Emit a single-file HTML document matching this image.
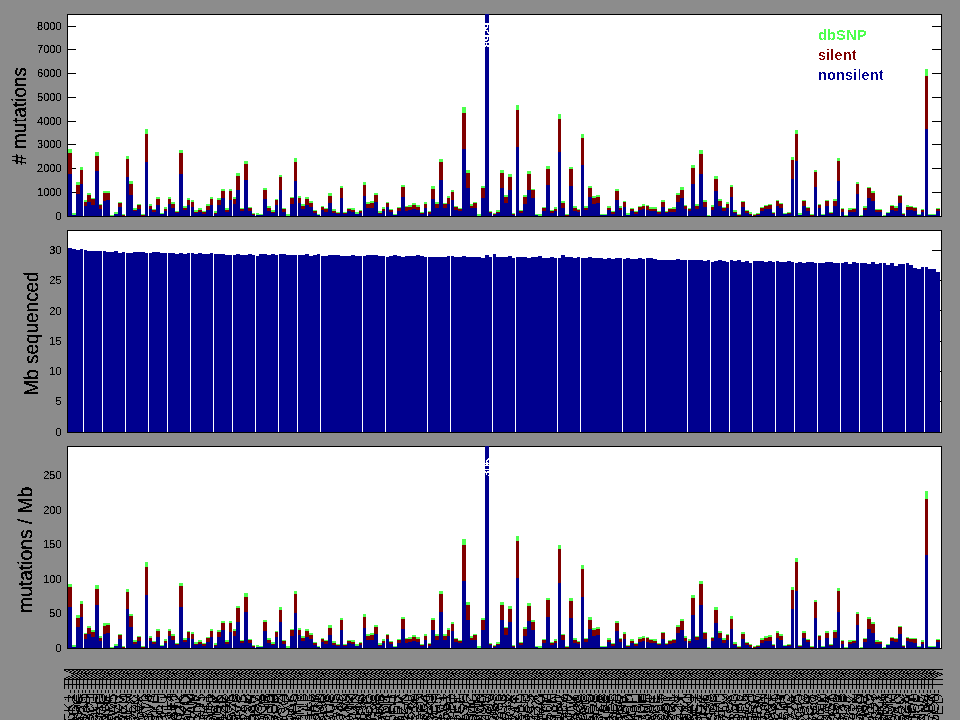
<!DOCTYPE html>
<html><head><meta charset="utf-8"><title>mutation rates</title>
<style>html,body{margin:0;padding:0;background:#8c8c8c;}body{width:960px;height:720px;overflow:hidden;}svg{display:block;font-family:"Liberation Sans",Arial,Helvetica,sans-serif;}</style>
</head><body>
<svg width="960" height="720" viewBox="0 0 960 720" style="will-change:transform">
<defs><filter id="px" x="0" y="0" width="960" height="720" filterUnits="userSpaceOnUse" color-interpolation-filters="sRGB"><feComponentTransfer><feFuncA type="discrete" tableValues="0 0 1 1 1"/></feComponentTransfer></filter><filter id="pt" x="-5%" y="-20%" width="110%" height="140%" color-interpolation-filters="sRGB"><feComponentTransfer><feFuncA type="discrete" tableValues="0 0 0 1 1"/></feComponentTransfer></filter><filter id="pb" x="0" y="0" width="960" height="720" filterUnits="userSpaceOnUse" color-interpolation-filters="sRGB"><feComponentTransfer><feFuncA type="discrete" tableValues="0 0 0 1 1 1 1 1 1 1"/></feComponentTransfer></filter><filter id="pl" x="-5%" y="-20%" width="110%" height="140%" color-interpolation-filters="sRGB"><feComponentTransfer><feFuncA type="discrete" tableValues="0 0 0 0 0 0 0 1 1 1"/></feComponentTransfer></filter></defs>
<rect x="0" y="0" width="960" height="720" fill="#8c8c8c"/>
<g shape-rendering="crispEdges"><rect x="67" y="14" width="875" height="203" fill="#000"/><rect x="68" y="15" width="873" height="201" fill="#fff"/><rect x="68" y="192" width="8" height="1" fill="#000"/><rect x="932" y="192" width="9" height="1" fill="#000"/><rect x="68" y="168" width="8" height="1" fill="#000"/><rect x="932" y="168" width="9" height="1" fill="#000"/><rect x="68" y="144" width="8" height="1" fill="#000"/><rect x="932" y="144" width="9" height="1" fill="#000"/><rect x="68" y="121" width="8" height="1" fill="#000"/><rect x="932" y="121" width="9" height="1" fill="#000"/><rect x="68" y="97" width="8" height="1" fill="#000"/><rect x="932" y="97" width="9" height="1" fill="#000"/><rect x="68" y="73" width="8" height="1" fill="#000"/><rect x="932" y="73" width="9" height="1" fill="#000"/><rect x="68" y="49" width="8" height="1" fill="#000"/><rect x="932" y="49" width="9" height="1" fill="#000"/><rect x="68" y="26" width="8" height="1" fill="#000"/><rect x="932" y="26" width="9" height="1" fill="#000"/></g>
<g shape-rendering="crispEdges"><path fill="#00008f" d="M68 174h4v42h-4zM72 215h4v1h-4zM76 194h4v22h-4zM80 184h3v32h-3zM84 206h3v10h-3zM87 202h4v14h-4zM91 205h4v11h-4zM95 171h4v45h-4zM99 209h3v7h-3zM103 201h3v15h-3zM106 200h4v16h-4zM114 214h4v2h-4zM118 207h4v9h-4zM126 177h3v39h-3zM129 195h4v21h-4zM133 211h4v5h-4zM137 209h4v7h-4zM145 162h3v54h-3zM149 209h3v7h-3zM152 212h4v4h-4zM156 205h4v11h-4zM160 214h4v2h-4zM164 211h3v5h-3zM168 204h3v12h-3zM171 208h4v8h-4zM175 213h4v3h-4zM179 174h4v42h-4zM183 210h4v6h-4zM187 205h3v11h-3zM191 207h3v9h-3zM194 213h4v3h-4zM198 212h4v4h-4zM202 214h4v2h-4zM206 210h4v6h-4zM210 205h3v11h-3zM214 214h3v2h-3zM217 205h4v11h-4zM221 198h4v18h-4zM225 212h4v4h-4zM229 200h3v16h-3zM233 204h3v12h-3zM236 190h4v26h-4zM240 211h4v5h-4zM244 180h4v36h-4zM248 211h4v5h-4zM252 215h3v1h-3zM256 215h3v1h-3zM259 215h4v1h-4zM263 199h4v17h-4zM267 211h4v5h-4zM271 213h4v3h-4zM275 205h3v11h-3zM279 190h3v26h-3zM282 212h4v4h-4zM290 204h4v12h-4zM294 181h3v35h-3zM298 203h3v13h-3zM301 209h4v7h-4zM305 205h4v11h-4zM309 207h4v9h-4zM313 213h4v3h-4zM317 215h3v1h-3zM321 210h3v6h-3zM324 212h4v4h-4zM328 203h4v13h-4zM332 213h4v3h-4zM336 214h4v2h-4zM340 198h3v18h-3zM343 214h4v2h-4zM347 211h4v5h-4zM351 212h4v4h-4zM355 214h4v2h-4zM359 213h3v3h-3zM363 196h3v20h-3zM366 208h4v8h-4zM370 208h4v8h-4zM374 202h4v14h-4zM378 214h4v2h-4zM382 211h3v5h-3zM386 207h3v9h-3zM389 212h4v4h-4zM393 215h4v1h-4zM397 211h4v5h-4zM401 197h4v19h-4zM405 211h3v5h-3zM408 210h4v6h-4zM412 209h4v7h-4zM416 210h4v6h-4zM420 214h4v2h-4zM424 208h3v8h-3zM428 214h3v2h-3zM431 199h4v17h-4zM435 208h4v8h-4zM439 180h4v36h-4zM443 208h4v8h-4zM447 204h3v12h-3zM451 200h3v16h-3zM454 210h4v6h-4zM458 211h4v5h-4zM462 149h4v67h-4zM466 188h4v28h-4zM470 208h3v8h-3zM473 208h4v8h-4zM481 198h4v18h-4zM485 14h4v202h-4zM489 213h3v3h-3zM493 215h3v1h-3zM496 213h4v3h-4zM500 188h4v28h-4zM504 203h4v13h-4zM508 190h4v26h-4zM512 215h3v1h-3zM516 147h3v69h-3zM519 213h4v3h-4zM523 204h4v12h-4zM527 190h4v26h-4zM531 198h4v18h-4zM535 215h3v1h-3zM542 211h4v5h-4zM546 185h4v31h-4zM550 213h4v3h-4zM554 211h3v5h-3zM558 152h3v64h-3zM561 208h4v8h-4zM569 186h4v30h-4zM573 211h4v5h-4zM577 212h3v4h-3zM581 165h3v51h-3zM584 210h4v6h-4zM588 197h4v19h-4zM592 204h4v12h-4zM596 203h4v13h-4zM600 215h3v1h-3zM603 215h4v1h-4zM607 210h4v6h-4zM611 214h4v2h-4zM615 200h4v16h-4zM619 210h3v6h-3zM623 207h3v9h-3zM626 215h4v1h-4zM630 211h4v5h-4zM634 214h4v2h-4zM638 210h4v6h-4zM642 209h3v7h-3zM646 210h3v6h-3zM649 211h4v5h-4zM653 211h4v5h-4zM657 214h4v2h-4zM661 207h4v9h-4zM665 213h3v3h-3zM668 212h4v4h-4zM672 212h4v4h-4zM676 202h4v14h-4zM680 198h4v18h-4zM684 209h3v7h-3zM688 211h3v5h-3zM691 184h4v32h-4zM695 209h4v7h-4zM699 174h4v42h-4zM703 207h4v9h-4zM711 210h3v6h-3zM714 191h4v25h-4zM718 206h4v10h-4zM722 211h4v5h-4zM726 208h3v8h-3zM730 197h3v19h-3zM733 213h4v3h-4zM741 207h4v9h-4zM745 213h4v3h-4zM749 215h3v1h-3zM756 215h4v1h-4zM760 211h4v5h-4zM764 209h4v7h-4zM768 209h4v7h-4zM772 214h3v2h-3zM776 206h3v10h-3zM779 208h4v8h-4zM783 214h4v2h-4zM787 214h4v2h-4zM791 179h3v37h-3zM795 161h3v55h-3zM798 215h4v1h-4zM802 206h4v10h-4zM806 211h4v5h-4zM814 187h3v29h-3zM818 208h3v8h-3zM821 215h4v1h-4zM825 206h4v10h-4zM829 214h4v2h-4zM833 206h4v10h-4zM837 181h3v35h-3zM841 212h3v4h-3zM848 212h4v4h-4zM852 212h4v4h-4zM856 194h3v22h-3zM863 210h4v6h-4zM867 198h4v18h-4zM871 201h4v15h-4zM875 212h4v4h-4zM879 212h3v4h-3zM886 213h4v3h-4zM890 210h4v6h-4zM894 211h4v5h-4zM898 203h4v13h-4zM902 215h3v1h-3zM906 210h3v6h-3zM909 210h4v6h-4zM913 211h4v5h-4zM917 215h4v1h-4zM921 212h3v4h-3zM925 129h3v87h-3zM928 215h4v1h-4zM932 215h4v1h-4zM936 211h4v5h-4z"/><path fill="#800000" d="M68 153h4v21h-4zM76 185h4v9h-4zM80 170h3v14h-3zM84 202h3v4h-3zM87 195h4v7h-4zM91 199h4v6h-4zM95 156h4v15h-4zM99 205h3v4h-3zM103 193h3v8h-3zM106 193h4v7h-4zM118 203h4v4h-4zM122 215h3v1h-3zM126 159h3v18h-3zM129 184h4v11h-4zM133 210h4v1h-4zM137 205h4v4h-4zM141 215h4v1h-4zM145 134h3v28h-3zM149 206h3v3h-3zM152 210h4v2h-4zM156 199h4v6h-4zM164 209h3v2h-3zM168 199h3v5h-3zM171 204h4v4h-4zM175 212h4v1h-4zM179 153h4v21h-4zM183 208h4v2h-4zM187 200h3v5h-3zM191 202h3v5h-3zM194 212h4v1h-4zM198 210h4v2h-4zM202 212h4v2h-4zM206 206h4v4h-4zM210 199h3v6h-3zM214 213h3v1h-3zM217 200h4v5h-4zM221 191h4v7h-4zM225 210h4v2h-4zM229 191h3v9h-3zM233 199h3v5h-3zM236 176h4v14h-4zM240 209h4v2h-4zM244 164h4v16h-4zM248 208h4v3h-4zM252 214h3v1h-3zM263 190h4v9h-4zM267 208h4v3h-4zM271 212h4v1h-4zM275 200h3v5h-3zM279 177h3v13h-3zM282 209h4v3h-4zM290 198h4v6h-4zM294 162h3v19h-3zM298 198h3v5h-3zM301 206h4v3h-4zM305 199h4v6h-4zM309 203h4v4h-4zM313 211h4v2h-4zM321 207h3v3h-3zM324 209h4v3h-4zM328 196h4v7h-4zM332 211h4v2h-4zM336 213h4v1h-4zM340 188h3v10h-3zM343 213h4v1h-4zM347 209h4v2h-4zM351 210h4v2h-4zM359 211h3v2h-3zM363 185h3v11h-3zM366 204h4v4h-4zM370 203h4v5h-4zM374 195h4v7h-4zM378 213h4v1h-4zM382 209h3v2h-3zM386 203h3v4h-3zM389 210h4v2h-4zM397 208h4v3h-4zM401 187h4v10h-4zM405 207h3v4h-3zM408 207h4v3h-4zM412 205h4v4h-4zM416 207h4v3h-4zM420 213h4v1h-4zM424 204h3v4h-3zM428 212h3v2h-3zM431 189h4v10h-4zM435 204h4v4h-4zM439 162h4v18h-4zM443 204h4v4h-4zM447 198h3v6h-3zM451 192h3v8h-3zM454 207h4v3h-4zM458 209h4v2h-4zM462 113h4v36h-4zM466 173h4v15h-4zM470 206h3v2h-3zM473 203h4v5h-4zM481 188h4v10h-4zM489 212h3v1h-3zM493 214h3v1h-3zM496 212h4v1h-4zM500 173h4v15h-4zM504 197h4v6h-4zM508 177h4v13h-4zM512 214h3v1h-3zM516 110h3v37h-3zM519 211h4v2h-4zM523 197h4v7h-4zM527 174h4v16h-4zM531 190h4v8h-4zM542 208h4v3h-4zM546 169h4v16h-4zM550 211h4v2h-4zM554 209h3v2h-3zM558 119h3v33h-3zM561 203h4v5h-4zM565 215h4v1h-4zM569 169h4v17h-4zM573 208h4v3h-4zM577 210h3v2h-3zM581 138h3v27h-3zM584 208h4v2h-4zM588 188h4v9h-4zM592 198h4v6h-4zM596 197h4v6h-4zM607 208h4v2h-4zM611 212h4v2h-4zM615 191h4v9h-4zM619 208h3v2h-3zM623 202h3v5h-3zM630 209h4v2h-4zM634 212h4v2h-4zM638 207h4v3h-4zM642 206h3v3h-3zM646 206h3v4h-3zM649 209h4v2h-4zM653 209h4v2h-4zM657 212h4v2h-4zM661 202h4v5h-4zM665 212h3v1h-3zM668 209h4v3h-4zM672 209h4v3h-4zM676 195h4v7h-4zM680 190h4v8h-4zM684 206h3v3h-3zM688 209h3v2h-3zM691 168h4v16h-4zM695 206h4v3h-4zM699 154h4v20h-4zM703 202h4v5h-4zM711 207h3v3h-3zM714 179h4v12h-4zM718 201h4v5h-4zM722 208h4v3h-4zM726 204h3v4h-3zM730 187h3v10h-3zM733 212h4v1h-4zM737 215h4v1h-4zM741 202h4v5h-4zM745 211h4v2h-4zM749 214h3v1h-3zM753 215h3v1h-3zM756 214h4v1h-4zM760 208h4v3h-4zM764 206h4v3h-4zM768 205h4v4h-4zM772 213h3v1h-3zM776 201h3v5h-3zM779 204h4v4h-4zM787 213h4v1h-4zM791 160h3v19h-3zM795 134h3v27h-3zM802 201h4v5h-4zM806 208h4v3h-4zM810 215h4v1h-4zM814 172h3v15h-3zM818 205h3v3h-3zM825 201h4v5h-4zM829 213h4v1h-4zM833 201h4v5h-4zM837 161h3v20h-3zM841 209h3v3h-3zM848 210h4v2h-4zM852 209h4v3h-4zM856 184h3v10h-3zM863 208h4v2h-4zM867 188h4v10h-4zM871 193h4v8h-4zM875 210h4v2h-4zM879 210h3v2h-3zM890 206h4v4h-4zM894 208h4v3h-4zM898 196h4v7h-4zM902 214h3v1h-3zM906 207h3v3h-3zM909 207h4v3h-4zM913 208h4v3h-4zM921 210h3v2h-3zM925 76h3v53h-3zM936 209h4v2h-4z"/><path fill="#4dff4d" d="M68 149h4v4h-4zM72 213h4v2h-4zM76 182h4v3h-4zM80 167h3v3h-3zM84 200h3v2h-3zM87 193h4v2h-4zM91 198h4v1h-4zM95 152h4v4h-4zM99 204h3v1h-3zM103 191h3v2h-3zM106 191h4v2h-4zM110 215h4v1h-4zM114 212h4v2h-4zM118 202h4v1h-4zM122 214h3v1h-3zM126 156h3v3h-3zM129 181h4v3h-4zM133 208h4v2h-4zM137 204h4v1h-4zM141 214h4v1h-4zM145 129h3v5h-3zM149 204h3v2h-3zM152 209h4v1h-4zM156 197h4v2h-4zM160 213h4v1h-4zM164 207h3v2h-3zM168 197h3v2h-3zM171 202h4v2h-4zM175 211h4v1h-4zM179 150h4v3h-4zM183 206h4v2h-4zM187 198h3v2h-3zM191 200h3v2h-3zM194 210h4v2h-4zM198 208h4v2h-4zM202 211h4v1h-4zM206 204h4v2h-4zM210 197h3v2h-3zM214 211h3v2h-3zM217 198h4v2h-4zM221 189h4v2h-4zM225 208h4v2h-4zM229 189h3v2h-3zM233 197h3v2h-3zM236 173h4v3h-4zM240 208h4v1h-4zM244 161h4v3h-4zM248 207h4v1h-4zM252 213h3v1h-3zM256 213h3v2h-3zM259 214h4v1h-4zM263 188h4v2h-4zM267 206h4v2h-4zM271 210h4v2h-4zM275 199h3v1h-3zM279 175h3v2h-3zM282 208h4v1h-4zM286 214h4v2h-4zM290 197h4v1h-4zM294 158h3v4h-3zM298 196h3v2h-3zM301 204h4v2h-4zM305 197h4v2h-4zM309 201h4v2h-4zM313 210h4v1h-4zM317 214h3v1h-3zM321 206h3v1h-3zM324 208h4v1h-4zM328 193h4v3h-4zM332 209h4v2h-4zM336 212h4v1h-4zM340 186h3v2h-3zM343 212h4v1h-4zM347 208h4v1h-4zM351 208h4v2h-4zM355 212h4v2h-4zM359 210h3v1h-3zM363 182h3v3h-3zM366 202h4v2h-4zM370 201h4v2h-4zM374 193h4v2h-4zM378 211h4v2h-4zM382 207h3v2h-3zM386 202h3v1h-3zM389 209h4v1h-4zM393 214h4v1h-4zM397 207h4v1h-4zM401 185h4v2h-4zM405 206h3v1h-3zM408 205h4v2h-4zM412 203h4v2h-4zM416 205h4v2h-4zM420 212h4v1h-4zM424 202h3v2h-3zM428 211h3v1h-3zM431 186h4v3h-4zM435 202h4v2h-4zM439 159h4v3h-4zM443 203h4v1h-4zM447 196h3v2h-3zM451 190h3v2h-3zM454 206h4v1h-4zM458 208h4v1h-4zM462 107h4v6h-4zM466 170h4v3h-4zM470 204h3v2h-3zM473 202h4v1h-4zM477 214h4v2h-4zM481 186h4v2h-4zM489 211h3v1h-3zM493 213h3v1h-3zM496 210h4v2h-4zM500 170h4v3h-4zM504 195h4v2h-4zM508 174h4v3h-4zM512 213h3v1h-3zM516 105h3v5h-3zM519 210h4v1h-4zM523 195h4v2h-4zM527 171h4v3h-4zM531 189h4v1h-4zM535 214h3v1h-3zM538 214h4v2h-4zM542 207h4v1h-4zM546 166h4v3h-4zM550 210h4v1h-4zM554 207h3v2h-3zM558 114h3v5h-3zM561 201h4v2h-4zM565 214h4v1h-4zM569 167h4v2h-4zM573 206h4v2h-4zM577 209h3v1h-3zM581 134h3v4h-3zM584 206h4v2h-4zM588 186h4v2h-4zM592 196h4v2h-4zM596 195h4v2h-4zM600 214h3v1h-3zM603 214h4v1h-4zM607 206h4v2h-4zM611 211h4v1h-4zM615 189h4v2h-4zM619 206h3v2h-3zM623 201h3v1h-3zM626 213h4v2h-4zM630 208h4v1h-4zM634 211h4v1h-4zM638 206h4v1h-4zM642 204h3v2h-3zM646 205h3v1h-3zM649 207h4v2h-4zM653 207h4v2h-4zM657 211h4v1h-4zM661 200h4v2h-4zM665 211h3v1h-3zM668 208h4v1h-4zM672 207h4v2h-4zM676 193h4v2h-4zM680 187h4v3h-4zM684 205h3v1h-3zM688 208h3v1h-3zM691 165h4v3h-4zM695 204h4v2h-4zM699 150h4v4h-4zM703 200h4v2h-4zM707 215h3v1h-3zM711 205h3v2h-3zM714 176h4v3h-4zM718 199h4v2h-4zM722 207h4v1h-4zM726 202h3v2h-3zM730 185h3v2h-3zM733 210h4v2h-4zM737 214h4v1h-4zM741 201h4v1h-4zM745 210h4v1h-4zM749 212h3v2h-3zM753 214h3v1h-3zM756 213h4v1h-4zM760 207h4v1h-4zM764 205h4v1h-4zM768 204h4v1h-4zM772 212h3v1h-3zM776 200h3v1h-3zM779 203h4v1h-4zM783 213h4v1h-4zM787 212h4v1h-4zM791 157h3v3h-3zM795 130h3v4h-3zM798 213h4v2h-4zM802 200h4v1h-4zM806 207h4v1h-4zM810 214h4v1h-4zM814 170h3v2h-3zM818 204h3v1h-3zM821 214h4v1h-4zM825 200h4v1h-4zM829 212h4v1h-4zM833 199h4v2h-4zM837 158h3v3h-3zM841 208h3v1h-3zM844 215h4v1h-4zM848 208h4v2h-4zM852 208h4v1h-4zM856 182h3v2h-3zM860 215h3v1h-3zM863 206h4v2h-4zM867 187h4v1h-4zM871 191h4v2h-4zM875 209h4v1h-4zM879 209h3v1h-3zM883 215h3v1h-3zM886 212h4v1h-4zM890 205h4v1h-4zM894 206h4v2h-4zM898 195h4v1h-4zM902 213h3v1h-3zM906 205h3v2h-3zM909 206h4v1h-4zM913 207h4v1h-4zM917 214h4v1h-4zM921 209h3v1h-3zM925 69h3v7h-3zM928 214h4v1h-4zM932 214h4v1h-4zM936 208h4v1h-4z"/></g>
<g shape-rendering="crispEdges"><rect x="67" y="230" width="875" height="203" fill="#000"/><rect x="68" y="231" width="873" height="201" fill="#fff"/><rect x="68" y="401" width="8" height="1" fill="#000"/><rect x="932" y="401" width="9" height="1" fill="#000"/><rect x="68" y="371" width="8" height="1" fill="#000"/><rect x="932" y="371" width="9" height="1" fill="#000"/><rect x="68" y="341" width="8" height="1" fill="#000"/><rect x="932" y="341" width="9" height="1" fill="#000"/><rect x="68" y="310" width="8" height="1" fill="#000"/><rect x="932" y="310" width="9" height="1" fill="#000"/><rect x="68" y="280" width="8" height="1" fill="#000"/><rect x="932" y="280" width="9" height="1" fill="#000"/><rect x="68" y="250" width="8" height="1" fill="#000"/><rect x="932" y="250" width="9" height="1" fill="#000"/></g>
<g shape-rendering="crispEdges"><path fill="#00008f" d="M68 248h4v184h-4zM72 249h4v183h-4zM76 250h4v182h-4zM80 249h3v183h-3zM84 250h3v182h-3zM87 251h4v181h-4zM91 251h4v181h-4zM95 251h4v181h-4zM99 251h3v181h-3zM103 251h3v181h-3zM106 252h4v180h-4zM110 252h4v180h-4zM114 251h4v181h-4zM118 253h4v179h-4zM122 252h3v180h-3zM126 253h3v179h-3zM129 253h4v179h-4zM133 252h4v180h-4zM137 252h4v180h-4zM141 252h4v180h-4zM145 253h3v179h-3zM149 253h3v179h-3zM152 252h4v180h-4zM156 252h4v180h-4zM160 253h4v179h-4zM164 253h3v179h-3zM168 253h3v179h-3zM171 253h4v179h-4zM175 254h4v178h-4zM179 253h4v179h-4zM183 254h4v178h-4zM187 253h3v179h-3zM191 253h3v179h-3zM194 254h4v178h-4zM198 253h4v179h-4zM202 254h4v178h-4zM206 254h4v178h-4zM210 253h3v179h-3zM214 254h3v178h-3zM217 254h4v178h-4zM221 254h4v178h-4zM225 255h4v177h-4zM229 255h3v177h-3zM233 255h3v177h-3zM236 254h4v178h-4zM240 255h4v177h-4zM244 255h4v177h-4zM248 254h4v178h-4zM252 255h3v177h-3zM256 256h3v176h-3zM259 254h4v178h-4zM263 254h4v178h-4zM267 255h4v177h-4zM271 254h4v178h-4zM275 255h3v177h-3zM279 254h3v178h-3zM282 254h4v178h-4zM286 255h4v177h-4zM290 255h4v177h-4zM294 255h3v177h-3zM298 255h3v177h-3zM301 255h4v177h-4zM305 254h4v178h-4zM309 256h4v176h-4zM313 255h4v177h-4zM317 254h3v178h-3zM321 256h3v176h-3zM324 256h4v176h-4zM328 255h4v177h-4zM332 255h4v177h-4zM336 255h4v177h-4zM340 256h3v176h-3zM343 256h4v176h-4zM347 256h4v176h-4zM351 255h4v177h-4zM355 256h4v176h-4zM359 256h3v176h-3zM363 256h3v176h-3zM366 255h4v177h-4zM370 255h4v177h-4zM374 255h4v177h-4zM378 256h4v176h-4zM382 256h3v176h-3zM386 257h3v175h-3zM389 256h4v176h-4zM393 255h4v177h-4zM397 256h4v176h-4zM401 257h4v175h-4zM405 256h3v176h-3zM408 256h4v176h-4zM412 256h4v176h-4zM416 255h4v177h-4zM420 256h4v176h-4zM424 257h3v175h-3zM428 257h3v175h-3zM431 257h4v175h-4zM435 257h4v175h-4zM439 257h4v175h-4zM443 257h4v175h-4zM447 256h3v176h-3zM451 256h3v176h-3zM454 257h4v175h-4zM458 257h4v175h-4zM462 256h4v176h-4zM466 257h4v175h-4zM470 257h3v175h-3zM473 257h4v175h-4zM477 257h4v175h-4zM481 258h4v174h-4zM485 255h4v177h-4zM489 257h3v175h-3zM493 254h3v178h-3zM496 257h4v175h-4zM500 257h4v175h-4zM504 257h4v175h-4zM508 256h4v176h-4zM512 258h3v174h-3zM516 257h3v175h-3zM519 257h4v175h-4zM523 257h4v175h-4zM527 258h4v174h-4zM531 257h4v175h-4zM535 257h3v175h-3zM538 256h4v176h-4zM542 258h4v174h-4zM546 258h4v174h-4zM550 257h4v175h-4zM554 258h3v174h-3zM558 258h3v174h-3zM561 255h4v177h-4zM565 257h4v175h-4zM569 257h4v175h-4zM573 258h4v174h-4zM577 257h3v175h-3zM581 258h3v174h-3zM584 258h4v174h-4zM588 257h4v175h-4zM592 258h4v174h-4zM596 258h4v174h-4zM600 258h3v174h-3zM603 259h4v173h-4zM607 258h4v174h-4zM611 259h4v173h-4zM615 258h4v174h-4zM619 258h3v174h-3zM623 259h3v173h-3zM626 258h4v174h-4zM630 259h4v173h-4zM634 259h4v173h-4zM638 258h4v174h-4zM642 259h3v173h-3zM646 258h3v174h-3zM649 258h4v174h-4zM653 259h4v173h-4zM657 260h4v172h-4zM661 260h4v172h-4zM665 260h3v172h-3zM668 260h4v172h-4zM672 260h4v172h-4zM676 259h4v173h-4zM680 260h4v172h-4zM684 260h3v172h-3zM688 260h3v172h-3zM691 260h4v172h-4zM695 260h4v172h-4zM699 260h4v172h-4zM703 261h4v171h-4zM707 260h3v172h-3zM711 262h3v170h-3zM714 261h4v171h-4zM718 260h4v172h-4zM722 261h4v171h-4zM726 262h3v170h-3zM730 260h3v172h-3zM733 261h4v171h-4zM737 260h4v172h-4zM741 262h4v170h-4zM745 261h4v171h-4zM749 263h3v169h-3zM753 261h3v171h-3zM756 261h4v171h-4zM760 261h4v171h-4zM764 262h4v170h-4zM768 261h4v171h-4zM772 262h3v170h-3zM776 261h3v171h-3zM779 262h4v170h-4zM783 262h4v170h-4zM787 261h4v171h-4zM791 262h3v170h-3zM795 263h3v169h-3zM798 262h4v170h-4zM802 263h4v169h-4zM806 262h4v170h-4zM810 262h4v170h-4zM814 263h3v169h-3zM818 263h3v169h-3zM821 263h4v169h-4zM825 262h4v170h-4zM829 262h4v170h-4zM833 263h4v169h-4zM837 263h3v169h-3zM841 263h3v169h-3zM844 262h4v170h-4zM848 264h4v168h-4zM852 262h4v170h-4zM856 263h3v169h-3zM860 263h3v169h-3zM863 263h4v169h-4zM867 264h4v168h-4zM871 262h4v170h-4zM875 264h4v168h-4zM879 263h3v169h-3zM883 263h3v169h-3zM886 265h4v167h-4zM890 263h4v169h-4zM894 266h4v166h-4zM898 264h4v168h-4zM902 264h3v168h-3zM906 263h3v169h-3zM909 265h4v167h-4zM913 268h4v164h-4zM917 269h4v163h-4zM921 267h3v165h-3zM925 267h3v165h-3zM928 269h4v163h-4zM932 269h4v163h-4zM936 272h4v160h-4z"/><path fill="#800000" d=""/><path fill="#4dff4d" d=""/></g>
<g shape-rendering="crispEdges"><rect x="67" y="446" width="875" height="203" fill="#000"/><rect x="68" y="447" width="873" height="201" fill="#fff"/></g>
<g shape-rendering="crispEdges"><path fill="#00008f" d="M68 607h4v41h-4zM72 647h4v1h-4zM76 627h4v21h-4zM80 617h3v31h-3zM84 639h3v9h-3zM87 634h4v14h-4zM91 637h4v11h-4zM95 605h4v43h-4zM99 641h3v7h-3zM103 634h3v14h-3zM106 633h4v15h-4zM114 646h4v2h-4zM118 639h4v9h-4zM126 609h3v39h-3zM129 627h4v21h-4zM133 644h4v4h-4zM137 641h4v7h-4zM145 595h3v53h-3zM149 641h3v7h-3zM152 644h4v4h-4zM156 637h4v11h-4zM160 646h4v2h-4zM164 643h3v5h-3zM168 636h3v12h-3zM171 640h4v8h-4zM175 645h4v3h-4zM179 607h4v41h-4zM183 642h4v6h-4zM187 638h3v10h-3zM191 639h3v9h-3zM194 645h4v3h-4zM198 644h4v4h-4zM202 646h4v2h-4zM206 642h4v6h-4zM210 637h3v11h-3zM214 646h3v2h-3zM217 637h4v11h-4zM221 630h4v18h-4zM225 644h4v4h-4zM229 632h3v16h-3zM233 636h3v12h-3zM236 622h4v26h-4zM240 643h4v5h-4zM244 612h4v36h-4zM248 643h4v5h-4zM252 647h3v1h-3zM256 647h3v1h-3zM259 647h4v1h-4zM263 631h4v17h-4zM267 643h4v5h-4zM271 645h4v3h-4zM275 637h3v11h-3zM279 622h3v26h-3zM282 644h4v4h-4zM290 636h4v12h-4zM294 613h3v35h-3zM298 635h3v13h-3zM301 641h4v7h-4zM305 637h4v11h-4zM309 639h4v9h-4zM313 645h4v3h-4zM317 647h3v1h-3zM321 642h3v6h-3zM324 644h4v4h-4zM328 635h4v13h-4zM332 645h4v3h-4zM336 646h4v2h-4zM340 630h3v18h-3zM343 646h4v2h-4zM347 643h4v5h-4zM351 644h4v4h-4zM355 646h4v2h-4zM359 645h3v3h-3zM363 628h3v20h-3zM366 640h4v8h-4zM370 640h4v8h-4zM374 634h4v14h-4zM378 646h4v2h-4zM382 643h3v5h-3zM386 639h3v9h-3zM389 644h4v4h-4zM393 647h4v1h-4zM397 643h4v5h-4zM401 629h4v19h-4zM405 643h3v5h-3zM408 642h4v6h-4zM412 641h4v7h-4zM416 642h4v6h-4zM420 646h4v2h-4zM424 640h3v8h-3zM428 646h3v2h-3zM431 630h4v18h-4zM435 640h4v8h-4zM439 612h4v36h-4zM443 640h4v8h-4zM447 636h3v12h-3zM451 631h3v17h-3zM454 642h4v6h-4zM458 643h4v5h-4zM462 581h4v67h-4zM466 620h4v28h-4zM470 640h3v8h-3zM473 640h4v8h-4zM481 630h4v18h-4zM485 446h4v202h-4zM489 645h3v3h-3zM493 647h3v1h-3zM496 645h4v3h-4zM500 620h4v28h-4zM504 635h4v13h-4zM508 622h4v26h-4zM512 647h3v1h-3zM516 578h3v70h-3zM519 645h4v3h-4zM523 636h4v12h-4zM527 621h4v27h-4zM531 630h4v18h-4zM535 647h3v1h-3zM542 643h4v5h-4zM546 617h4v31h-4zM550 645h4v3h-4zM554 643h3v5h-3zM558 583h3v65h-3zM561 640h4v8h-4zM569 618h4v30h-4zM573 643h4v5h-4zM577 644h3v4h-3zM581 597h3v51h-3zM584 642h4v6h-4zM588 629h4v19h-4zM592 636h4v12h-4zM596 635h4v13h-4zM600 647h3v1h-3zM603 647h4v1h-4zM607 642h4v6h-4zM611 646h4v2h-4zM615 631h4v17h-4zM619 642h3v6h-3zM623 639h3v9h-3zM626 647h4v1h-4zM630 643h4v5h-4zM634 646h4v2h-4zM638 642h4v6h-4zM642 641h3v7h-3zM646 642h3v6h-3zM649 643h4v5h-4zM653 643h4v5h-4zM657 645h4v3h-4zM661 639h4v9h-4zM665 645h3v3h-3zM668 644h4v4h-4zM672 643h4v5h-4zM676 633h4v15h-4zM680 630h4v18h-4zM684 641h3v7h-3zM688 643h3v5h-3zM691 615h4v33h-4zM695 640h4v8h-4zM699 605h4v43h-4zM703 639h4v9h-4zM711 641h3v7h-3zM714 623h4v25h-4zM718 638h4v10h-4zM722 643h4v5h-4zM726 640h3v8h-3zM730 629h3v19h-3zM733 645h4v3h-4zM741 639h4v9h-4zM745 645h4v3h-4zM749 647h3v1h-3zM756 647h4v1h-4zM760 643h4v5h-4zM764 641h4v7h-4zM768 641h4v7h-4zM772 646h3v2h-3zM776 638h3v10h-3zM779 640h4v8h-4zM783 646h4v2h-4zM787 646h4v2h-4zM791 609h3v39h-3zM795 591h3v57h-3zM798 647h4v1h-4zM802 638h4v10h-4zM806 642h4v6h-4zM814 618h3v30h-3zM818 640h3v8h-3zM821 647h4v1h-4zM825 638h4v10h-4zM829 646h4v2h-4zM833 638h4v10h-4zM837 612h3v36h-3zM841 644h3v4h-3zM848 644h4v4h-4zM852 643h4v5h-4zM856 625h3v23h-3zM863 642h4v6h-4zM867 629h4v19h-4zM871 633h4v15h-4zM875 644h4v4h-4zM879 644h3v4h-3zM886 645h4v3h-4zM890 641h4v7h-4zM894 642h4v6h-4zM898 634h4v14h-4zM902 647h3v1h-3zM906 641h3v7h-3zM909 642h4v6h-4zM913 643h4v5h-4zM917 647h4v1h-4zM921 644h3v4h-3zM925 555h3v93h-3zM928 647h4v1h-4zM932 647h4v1h-4zM936 642h4v6h-4z"/><path fill="#800000" d="M68 587h4v20h-4zM76 618h4v9h-4zM80 604h3v13h-3zM84 634h3v5h-3zM87 628h4v6h-4zM91 632h4v5h-4zM95 589h4v16h-4zM99 638h3v3h-3zM103 626h3v8h-3zM106 625h4v8h-4zM118 635h4v4h-4zM122 647h3v1h-3zM126 592h3v17h-3zM129 616h4v11h-4zM133 642h4v2h-4zM137 637h4v4h-4zM141 647h4v1h-4zM145 567h3v28h-3zM149 638h3v3h-3zM152 642h4v2h-4zM156 631h4v6h-4zM164 641h3v2h-3zM168 631h3v5h-3zM171 636h4v4h-4zM175 644h4v1h-4zM179 586h4v21h-4zM183 640h4v2h-4zM187 632h3v6h-3zM191 634h3v5h-3zM194 644h4v1h-4zM198 642h4v2h-4zM202 644h4v2h-4zM206 638h4v4h-4zM210 631h3v6h-3zM214 645h3v1h-3zM217 632h4v5h-4zM221 623h4v7h-4zM225 642h4v2h-4zM229 623h3v9h-3zM233 631h3v5h-3zM236 608h4v14h-4zM240 641h4v2h-4zM244 597h4v15h-4zM248 640h4v3h-4zM252 646h3v1h-3zM263 622h4v9h-4zM267 640h4v3h-4zM271 644h4v1h-4zM275 632h3v5h-3zM279 610h3v12h-3zM282 641h4v3h-4zM290 630h4v6h-4zM294 594h3v19h-3zM298 630h3v5h-3zM301 638h4v3h-4zM305 631h4v6h-4zM309 635h4v4h-4zM313 643h4v2h-4zM321 639h3v3h-3zM324 641h4v3h-4zM328 628h4v7h-4zM332 643h4v2h-4zM336 645h4v1h-4zM340 620h3v10h-3zM343 645h4v1h-4zM347 641h4v2h-4zM351 642h4v2h-4zM359 643h3v2h-3zM363 617h3v11h-3zM366 636h4v4h-4zM370 635h4v5h-4zM374 627h4v7h-4zM378 645h4v1h-4zM382 641h3v2h-3zM386 635h3v4h-3zM389 642h4v2h-4zM397 640h4v3h-4zM401 619h4v10h-4zM405 639h3v4h-3zM408 639h4v3h-4zM412 637h4v4h-4zM416 639h4v3h-4zM420 645h4v1h-4zM424 636h3v4h-3zM428 644h3v2h-3zM431 620h4v10h-4zM435 636h4v4h-4zM439 594h4v18h-4zM443 636h4v4h-4zM447 630h3v6h-3zM451 624h3v7h-3zM454 639h4v3h-4zM458 641h4v2h-4zM462 545h4v36h-4zM466 605h4v15h-4zM470 638h3v2h-3zM473 635h4v5h-4zM481 620h4v10h-4zM489 644h3v1h-3zM493 646h3v1h-3zM496 644h4v1h-4zM500 605h4v15h-4zM504 628h4v7h-4zM508 609h4v13h-4zM512 646h3v1h-3zM516 541h3v37h-3zM519 643h4v2h-4zM523 629h4v7h-4zM527 606h4v15h-4zM531 622h4v8h-4zM542 640h4v3h-4zM546 600h4v17h-4zM550 643h4v2h-4zM554 641h3v2h-3zM558 549h3v34h-3zM561 635h4v5h-4zM565 647h4v1h-4zM569 601h4v17h-4zM573 640h4v3h-4zM577 642h3v2h-3zM581 569h3v28h-3zM584 639h4v3h-4zM588 620h4v9h-4zM592 630h4v6h-4zM596 629h4v6h-4zM607 640h4v2h-4zM611 644h4v2h-4zM615 623h4v8h-4zM619 639h3v3h-3zM623 634h3v5h-3zM626 646h4v1h-4zM630 641h4v2h-4zM634 644h4v2h-4zM638 639h4v3h-4zM642 638h3v3h-3zM646 638h3v4h-3zM649 640h4v3h-4zM653 641h4v2h-4zM657 644h4v1h-4zM661 633h4v6h-4zM665 644h3v1h-3zM668 641h4v3h-4zM672 640h4v3h-4zM676 627h4v6h-4zM680 621h4v9h-4zM684 638h3v3h-3zM688 641h3v2h-3zM691 598h4v17h-4zM695 637h4v3h-4zM699 584h4v21h-4zM703 633h4v6h-4zM711 638h3v3h-3zM714 610h4v13h-4zM718 633h4v5h-4zM722 640h4v3h-4zM726 635h3v5h-3zM730 619h3v10h-3zM733 644h4v1h-4zM737 647h4v1h-4zM741 634h4v5h-4zM745 643h4v2h-4zM749 645h3v2h-3zM753 647h3v1h-3zM756 646h4v1h-4zM760 640h4v3h-4zM764 638h4v3h-4zM768 637h4v4h-4zM772 645h3v1h-3zM776 633h3v5h-3zM779 636h4v4h-4zM787 645h4v1h-4zM791 590h3v19h-3zM795 562h3v29h-3zM798 646h4v1h-4zM802 633h4v5h-4zM806 640h4v2h-4zM810 647h4v1h-4zM814 602h3v16h-3zM818 636h3v4h-3zM825 633h4v5h-4zM829 645h4v1h-4zM833 632h4v6h-4zM837 591h3v21h-3zM841 641h3v3h-3zM848 642h4v2h-4zM852 641h4v2h-4zM856 614h3v11h-3zM863 639h4v3h-4zM867 619h4v10h-4zM871 624h4v9h-4zM875 642h4v2h-4zM879 642h3v2h-3zM890 638h4v3h-4zM894 639h4v3h-4zM898 627h4v7h-4zM902 646h3v1h-3zM906 638h3v3h-3zM909 639h4v3h-4zM913 639h4v4h-4zM921 642h3v2h-3zM925 499h3v56h-3zM936 640h4v2h-4z"/><path fill="#4dff4d" d="M68 584h4v3h-4zM72 645h4v2h-4zM76 615h4v3h-4zM80 601h3v3h-3zM84 633h3v1h-3zM87 626h4v2h-4zM91 630h4v2h-4zM95 585h4v4h-4zM99 636h3v2h-3zM103 623h3v3h-3zM106 623h4v2h-4zM110 647h4v1h-4zM114 644h4v2h-4zM118 634h4v1h-4zM122 646h3v1h-3zM126 589h3v3h-3zM129 614h4v2h-4zM133 640h4v2h-4zM137 636h4v1h-4zM141 646h4v1h-4zM145 562h3v5h-3zM149 636h3v2h-3zM152 641h4v1h-4zM156 629h4v2h-4zM160 645h4v1h-4zM164 639h3v2h-3zM168 629h3v2h-3zM171 634h4v2h-4zM175 643h4v1h-4zM179 583h4v3h-4zM183 638h4v2h-4zM187 631h3v1h-3zM191 632h3v2h-3zM194 642h4v2h-4zM198 640h4v2h-4zM202 643h4v1h-4zM206 637h4v1h-4zM210 629h3v2h-3zM214 643h3v2h-3zM217 630h4v2h-4zM221 621h4v2h-4zM225 640h4v2h-4zM229 621h3v2h-3zM233 629h3v2h-3zM236 606h4v2h-4zM240 640h4v1h-4zM244 593h4v4h-4zM248 639h4v1h-4zM252 645h3v1h-3zM256 645h3v2h-3zM259 646h4v1h-4zM263 620h4v2h-4zM267 638h4v2h-4zM271 642h4v2h-4zM275 631h3v1h-3zM279 607h3v3h-3zM282 640h4v1h-4zM286 646h4v2h-4zM290 629h4v1h-4zM294 591h3v3h-3zM298 628h3v2h-3zM301 636h4v2h-4zM305 629h4v2h-4zM309 633h4v2h-4zM313 642h4v1h-4zM317 646h3v1h-3zM321 638h3v1h-3zM324 640h4v1h-4zM328 625h4v3h-4zM332 641h4v2h-4zM336 644h4v1h-4zM340 618h3v2h-3zM343 644h4v1h-4zM347 640h4v1h-4zM351 640h4v2h-4zM355 644h4v2h-4zM359 642h3v1h-3zM363 614h3v3h-3zM366 634h4v2h-4zM370 633h4v2h-4zM374 625h4v2h-4zM378 643h4v2h-4zM382 639h3v2h-3zM386 634h3v1h-3zM389 641h4v1h-4zM393 646h4v1h-4zM397 639h4v1h-4zM401 617h4v2h-4zM405 638h3v1h-3zM408 637h4v2h-4zM412 635h4v2h-4zM416 637h4v2h-4zM420 644h4v1h-4zM424 634h3v2h-3zM428 643h3v1h-3zM431 618h4v2h-4zM435 634h4v2h-4zM439 591h4v3h-4zM443 634h4v2h-4zM447 628h3v2h-3zM451 622h3v2h-3zM454 638h4v1h-4zM458 640h4v1h-4zM462 539h4v6h-4zM466 602h4v3h-4zM470 636h3v2h-3zM473 634h4v1h-4zM477 646h4v2h-4zM481 618h4v2h-4zM489 643h3v1h-3zM493 645h3v1h-3zM496 642h4v2h-4zM500 602h4v3h-4zM504 627h4v1h-4zM508 606h4v3h-4zM512 645h3v1h-3zM516 536h3v5h-3zM519 642h4v1h-4zM523 627h4v2h-4zM527 603h4v3h-4zM531 620h4v2h-4zM535 646h3v1h-3zM538 646h4v2h-4zM542 639h4v1h-4zM546 598h4v2h-4zM550 642h4v1h-4zM554 639h3v2h-3zM558 545h3v4h-3zM561 634h4v1h-4zM565 646h4v1h-4zM569 598h4v3h-4zM573 638h4v2h-4zM577 641h3v1h-3zM581 565h3v4h-3zM584 638h4v1h-4zM588 617h4v3h-4zM592 628h4v2h-4zM596 627h4v2h-4zM600 646h3v1h-3zM603 646h4v1h-4zM607 638h4v2h-4zM611 643h4v1h-4zM615 621h4v2h-4zM619 638h3v1h-3zM623 632h3v2h-3zM626 645h4v1h-4zM630 639h4v2h-4zM634 643h4v1h-4zM638 637h4v2h-4zM642 636h3v2h-3zM646 637h3v1h-3zM649 639h4v1h-4zM653 639h4v2h-4zM657 643h4v1h-4zM661 632h4v1h-4zM665 643h3v1h-3zM668 640h4v1h-4zM672 639h4v1h-4zM676 625h4v2h-4zM680 619h4v2h-4zM684 636h3v2h-3zM688 639h3v2h-3zM691 595h4v3h-4zM695 636h4v1h-4zM699 581h4v3h-4zM703 632h4v1h-4zM707 647h3v1h-3zM711 637h3v1h-3zM714 607h4v3h-4zM718 631h4v2h-4zM722 638h4v2h-4zM726 634h3v1h-3zM730 616h3v3h-3zM733 642h4v2h-4zM737 646h4v1h-4zM741 632h4v2h-4zM745 642h4v1h-4zM749 644h3v1h-3zM753 646h3v1h-3zM756 645h4v1h-4zM760 638h4v2h-4zM764 636h4v2h-4zM768 635h4v2h-4zM772 644h3v1h-3zM776 631h3v2h-3zM779 634h4v2h-4zM783 645h4v1h-4zM787 644h4v1h-4zM791 587h3v3h-3zM795 558h3v4h-3zM798 645h4v1h-4zM802 631h4v2h-4zM806 639h4v1h-4zM810 646h4v1h-4zM814 600h3v2h-3zM818 635h3v1h-3zM821 646h4v1h-4zM825 631h4v2h-4zM829 644h4v1h-4zM833 630h4v2h-4zM837 588h3v3h-3zM841 640h3v1h-3zM844 647h4v1h-4zM848 640h4v2h-4zM852 640h4v1h-4zM856 612h3v2h-3zM860 647h3v1h-3zM863 638h4v1h-4zM867 617h4v2h-4zM871 622h4v2h-4zM875 640h4v2h-4zM879 641h3v1h-3zM883 647h3v1h-3zM886 644h4v1h-4zM890 637h4v1h-4zM894 638h4v1h-4zM898 626h4v1h-4zM902 645h3v1h-3zM906 637h3v1h-3zM909 638h4v1h-4zM913 638h4v1h-4zM917 646h4v1h-4zM921 640h3v2h-3zM925 491h3v8h-3zM928 646h4v1h-4zM932 646h4v1h-4zM936 639h4v1h-4z"/></g>
<g filter="url(#px)" font-size="11px" fill="#000" text-anchor="end">
<text x="61.6" y="220">0</text>
<text x="61.6" y="196">1000</text>
<text x="61.6" y="172">2000</text>
<text x="61.6" y="148">3000</text>
<text x="61.6" y="125">4000</text>
<text x="61.6" y="101">5000</text>
<text x="61.6" y="77">6000</text>
<text x="61.6" y="53">7000</text>
<text x="61.6" y="30">8000</text>
<text x="61.6" y="436">0</text>
<text x="61.6" y="405">5</text>
<text x="61.6" y="375">10</text>
<text x="61.6" y="345">15</text>
<text x="61.6" y="315">20</text>
<text x="61.6" y="284">25</text>
<text x="61.6" y="254">30</text>
<text x="61.6" y="652">0</text>
<text x="61.6" y="617">50</text>
<text x="61.6" y="583">100</text>
<text x="61.6" y="548">150</text>
<text x="61.6" y="514">200</text>
<text x="61.6" y="479">250</text>
</g>
<g filter="url(#pb)" font-size="20px" fill="#000" text-anchor="middle" style="text-rendering:geometricPrecision">
<text transform="translate(25.9,116) rotate(-90) scale(0.945,1)"># mutations</text>
<text transform="translate(37.7,333.4) rotate(-90) scale(0.945,1)">Mb sequenced</text>
<text transform="translate(32.2,549.8) rotate(-90) scale(0.962,1)">mutations / Mb</text>
</g>
<g filter="url(#pt)" font-size="14.8px" font-weight="bold">
<text x="818" y="40" fill="#4dff4d">dbSNP</text>
<text x="818" y="60" fill="#800000">silent</text>
<text x="818" y="80" fill="#00008f">nonsilent</text>
</g>
<g filter="url(#px)" font-size="11px" fill="#fff" stroke="#fff" stroke-width="0.15" text-anchor="middle"><text transform="translate(491.0,35) rotate(-90)">8929</text>
<text transform="translate(491.0,467.5) rotate(-90)">306</text></g>
<g font-size="16px" fill="#000" style="text-rendering:geometricPrecision">
<text filter="url(#pl)" transform="translate(75,669) rotate(-90) scale(1.028,1)" x="-137.95 -127.57 -117.19 -105.95 -92.98 -87.80 -77.42 -67.04 -61.85 -51.47 -42.82 -32.44 -24.55 -19.96 -12.02" y="0">SKCM-EE-A5K1-TM</text>
<text filter="url(#pl)" transform="translate(79,669) rotate(-90) scale(1.028,1)" x="-140.83 -130.45 -120.07 -108.83 -95.86 -90.68 -80.30 -69.92 -64.74 -54.35 -45.70 -33.59 -24.55 -19.96 -12.02" y="0">SKCM-EE-A1GZ-TM</text>
<text filter="url(#pl)" transform="translate(83,669) rotate(-90) scale(1.028,1)" x="-141.64 -131.26 -120.88 -109.64 -96.67 -91.49 -81.11 -69.87 -64.68 -54.30 -45.65 -35.26 -24.55 -19.96 -12.02" y="0">SKCM-ER-A8PC-TM</text>
<text filter="url(#pl)" transform="translate(87,669) rotate(-90) scale(1.028,1)" x="-138.95 -128.57 -118.19 -106.95 -93.98 -88.80 -77.56 -67.18 -62.00 -51.62 -42.96 -34.30 -24.55 -19.96 -12.02" y="0">SKCM-DA-A62E-TM</text>
<text filter="url(#pl)" transform="translate(90,669) rotate(-90) scale(1.028,1)" x="-138.02 -127.64 -117.26 -106.02 -93.06 -87.87 -78.37 -67.98 -62.80 -52.42 -43.76 -35.11 -24.55 -19.96 -12.02" y="0">SKCM-FS-A13D-TM</text>
<text filter="url(#pl)" transform="translate(94,669) rotate(-90) scale(1.028,1)" x="-138.81 -128.43 -118.05 -106.81 -93.84 -88.66 -78.28 -67.90 -62.71 -52.33 -43.68 -32.44 -24.55 -19.96 -12.02" y="0">SKCM-EE-A3D1-TM</text>
<text filter="url(#pl)" transform="translate(98,669) rotate(-90) scale(1.028,1)" x="-137.49 -127.11 -116.73 -105.49 -92.52 -87.34 -77.83 -66.59 -61.41 -51.03 -42.37 -31.13 -24.55 -19.96 -12.02" y="0">SKCM-FR-A3CJ-TM</text>
<text filter="url(#pl)" transform="translate(102,669) rotate(-90) scale(1.028,1)" x="-140.07 -129.69 -119.31 -108.07 -95.10 -89.92 -80.41 -69.17 -63.99 -53.61 -44.95 -34.57 -24.55 -19.96 -12.02" y="0">SKCM-FR-A6KH-TM</text>
<text filter="url(#pl)" transform="translate(106,669) rotate(-90) scale(1.028,1)" x="-142.80 -132.42 -122.04 -110.80 -97.83 -92.65 -81.41 -72.75 -67.57 -57.19 -48.53 -35.57 -24.55 -19.96 -12.02" y="0">SKCM-D9-A8MG-TM</text>
<text filter="url(#pl)" transform="translate(110,669) rotate(-90) scale(1.028,1)" x="-141.54 -131.16 -120.78 -109.54 -96.58 -91.39 -81.01 -70.63 -65.45 -55.07 -46.41 -34.30 -24.55 -19.96 -12.02" y="0">SKCM-EE-A5GE-TM</text>
<text filter="url(#pl)" transform="translate(113,669) rotate(-90) scale(1.028,1)" x="-137.93 -127.55 -117.16 -105.92 -92.96 -87.78 -77.40 -67.01 -61.83 -51.45 -42.79 -32.41 -24.55 -19.96 -12.02" y="0">SKCM-XV-A9P7-TM</text>
<text filter="url(#pl)" transform="translate(117,669) rotate(-90) scale(1.028,1)" x="-146.68 -136.30 -125.92 -114.68 -101.71 -96.53 -81.84 -71.46 -66.27 -55.89 -47.24 -32.55 -24.55 -19.96 -12.02" y="0">SKCM-WE-A6W5-TM</text>
<text filter="url(#pl)" transform="translate(121,669) rotate(-90) scale(1.028,1)" x="-139.77 -129.39 -119.01 -107.77 -94.80 -89.62 -79.24 -69.73 -64.55 -54.17 -45.51 -35.13 -24.55 -19.96 -12.02" y="0">SKCM-BF-A5VR-TM</text>
<text filter="url(#pl)" transform="translate(125,669) rotate(-90) scale(1.028,1)" x="-136.96 -126.58 -116.20 -104.96 -91.99 -86.81 -77.30 -68.65 -63.47 -53.08 -44.43 -34.92 -24.55 -19.96 -12.02" y="0">SKCM-Z2-A3FV-TM</text>
<text filter="url(#pl)" transform="translate(129,669) rotate(-90) scale(1.028,1)" x="-138.25 -127.87 -117.49 -106.25 -93.28 -88.10 -78.59 -67.35 -62.17 -51.79 -43.13 -32.75 -24.55 -19.96 -12.02" y="0">SKCM-FR-A7X4-TM</text>
<text filter="url(#pl)" transform="translate(132,669) rotate(-90) scale(1.028,1)" x="-137.48 -127.10 -116.72 -105.48 -92.52 -87.33 -77.83 -69.17 -63.99 -53.61 -44.95 -34.57 -24.55 -19.96 -12.02" y="0">SKCM-Z2-A9EH-TM</text>
<text filter="url(#pl)" transform="translate(136,669) rotate(-90) scale(1.028,1)" x="-141.03 -130.65 -120.27 -109.03 -96.06 -90.88 -78.77 -67.53 -62.35 -51.97 -43.31 -34.66 -24.55 -19.96 -12.02" y="0">SKCM-GN-A6LX-TM</text>
<text filter="url(#pl)" transform="translate(140,669) rotate(-90) scale(1.028,1)" x="-139.91 -129.53 -119.15 -107.91 -94.94 -89.76 -79.38 -68.14 -62.96 -52.58 -43.92 -35.26 -24.55 -19.96 -12.02" y="0">SKCM-ER-A72C-TM</text>
<text filter="url(#pl)" transform="translate(144,669) rotate(-90) scale(1.028,1)" x="-145.33 -134.95 -124.57 -113.33 -100.36 -95.18 -83.07 -73.57 -68.38 -58.00 -49.35 -34.66 -24.55 -19.96 -12.02" y="0">SKCM-GF-A8WX-TM</text>
<text filter="url(#pl)" transform="translate(148,669) rotate(-90) scale(1.028,1)" x="-137.19 -126.81 -116.43 -105.19 -92.23 -87.04 -76.66 -65.42 -60.24 -49.86 -41.20 -32.55 -24.55 -19.96 -12.02" y="0">SKCM-ER-A975-TM</text>
<text filter="url(#pl)" transform="translate(152,669) rotate(-90) scale(1.028,1)" x="-138.01 -127.63 -117.25 -106.01 -93.05 -87.86 -77.48 -66.24 -61.06 -50.68 -42.02 -32.51 -24.55 -19.96 -12.02" y="0">SKCM-ER-A1T6-TM</text>
<text filter="url(#pl)" transform="translate(155,669) rotate(-90) scale(1.028,1)" x="-138.25 -127.87 -117.49 -106.25 -93.28 -88.10 -78.59 -67.35 -62.17 -51.79 -43.13 -32.75 -24.55 -19.96 -12.02" y="0">SKCM-FR-A0V4-TM</text>
<text filter="url(#pl)" transform="translate(159,669) rotate(-90) scale(1.028,1)" x="-143.97 -133.59 -123.21 -111.97 -99.00 -93.82 -79.13 -68.75 -63.57 -53.18 -44.53 -34.15 -24.55 -19.96 -12.02" y="0">SKCM-WE-A6YB-TM</text>
<text filter="url(#pl)" transform="translate(163,669) rotate(-90) scale(1.028,1)" x="-140.08 -129.70 -119.32 -108.08 -95.12 -89.93 -79.55 -67.45 -62.26 -51.88 -43.23 -34.57 -24.55 -19.96 -12.02" y="0">SKCM-YG-A5LH-TM</text>
<text filter="url(#pl)" transform="translate(167,669) rotate(-90) scale(1.028,1)" x="-142.74 -132.36 -121.98 -110.74 -97.77 -92.59 -80.48 -69.24 -64.06 -53.68 -45.02 -34.64 -24.55 -19.96 -12.02" y="0">SKCM-GN-A0PU-TM</text>
<text filter="url(#pl)" transform="translate(171,669) rotate(-90) scale(1.028,1)" x="-137.95 -127.57 -117.19 -105.95 -92.98 -87.80 -77.42 -65.31 -60.13 -49.75 -41.09 -32.44 -24.55 -19.96 -12.02" y="0">SKCM-YG-A311-TM</text>
<text filter="url(#pl)" transform="translate(175,669) rotate(-90) scale(1.028,1)" x="-138.26 -127.87 -117.49 -106.25 -93.29 -88.11 -76.87 -65.63 -60.44 -50.06 -41.40 -32.75 -24.55 -19.96 -12.02" y="0">SKCM-HR-A1L4-TM</text>
<text filter="url(#pl)" transform="translate(178,669) rotate(-90) scale(1.028,1)" x="-130.57 -120.19 -109.81 -98.57 -85.61 -80.42 -76.10 -64.86 -59.68 -49.29 -40.64 -31.13 -24.55 -19.96 -12.02" y="0">SKCM-IH-A8TJ-TM</text>
<text filter="url(#pl)" transform="translate(182,669) rotate(-90) scale(1.028,1)" x="-137.90 -127.52 -117.14 -105.90 -92.94 -87.75 -75.65 -66.14 -60.96 -50.58 -41.92 -32.41 -24.55 -19.96 -12.02" y="0">SKCM-GF-A8T2-TM</text>
<text filter="url(#pl)" transform="translate(186,669) rotate(-90) scale(1.028,1)" x="-142.91 -132.53 -122.15 -110.91 -97.94 -92.76 -82.38 -71.14 -65.95 -55.57 -46.92 -34.81 -24.55 -19.96 -12.02" y="0">SKCM-ER-A6QK-TM</text>
<text filter="url(#pl)" transform="translate(190,669) rotate(-90) scale(1.028,1)" x="-142.37 -131.99 -121.61 -110.37 -97.40 -92.22 -80.98 -70.60 -65.42 -55.04 -46.38 -36.00 -24.55 -19.96 -12.02" y="0">SKCM-DA-A2KQ-TM</text>
<text filter="url(#pl)" transform="translate(194,669) rotate(-90) scale(1.028,1)" x="-140.12 -129.74 -119.36 -108.12 -95.16 -89.97 -79.59 -69.21 -64.03 -53.65 -44.99 -36.33 -24.55 -19.96 -12.02" y="0">SKCM-EB-A07M-TM</text>
<text filter="url(#pl)" transform="translate(197,669) rotate(-90) scale(1.028,1)" x="-135.13 -124.75 -114.36 -103.13 -90.16 -84.98 -80.65 -69.41 -64.23 -53.85 -45.19 -34.81 -24.55 -19.96 -12.02" y="0">SKCM-IH-A4AK-TM</text>
<text filter="url(#pl)" transform="translate(201,669) rotate(-90) scale(1.028,1)" x="-146.59 -136.21 -125.83 -114.59 -101.62 -96.44 -84.33 -73.09 -67.91 -57.53 -48.87 -39.37 -24.55 -19.96 -12.02" y="0">SKCM-GN-A8ZW-TM</text>
<text filter="url(#pl)" transform="translate(205,669) rotate(-90) scale(1.028,1)" x="-138.92 -128.54 -118.16 -106.92 -93.95 -88.77 -78.39 -68.01 -62.82 -52.44 -43.79 -32.55 -24.55 -19.96 -12.02" y="0">SKCM-XV-A8D5-TM</text>
<text filter="url(#pl)" transform="translate(209,669) rotate(-90) scale(1.028,1)" x="-137.94 -127.56 -117.18 -105.94 -92.98 -87.79 -76.55 -65.31 -60.13 -49.75 -41.09 -32.44 -24.55 -19.96 -12.02" y="0">SKCM-HR-A611-TM</text>
<text filter="url(#pl)" transform="translate(213,669) rotate(-90) scale(1.028,1)" x="-136.23 -125.84 -115.46 -104.22 -91.26 -86.07 -75.69 -65.31 -60.13 -49.75 -41.09 -32.44 -24.55 -19.96 -12.02" y="0">SKCM-EE-A161-TM</text>
<text filter="url(#pl)" transform="translate(217,669) rotate(-90) scale(1.028,1)" x="-143.97 -133.59 -123.21 -111.97 -99.00 -93.82 -79.13 -68.75 -63.57 -53.18 -44.53 -34.15 -24.55 -19.96 -12.02" y="0">SKCM-WE-A3EP-TM</text>
<text filter="url(#pl)" transform="translate(220,669) rotate(-90) scale(1.028,1)" x="-141.03 -130.65 -120.27 -109.03 -96.06 -90.88 -80.50 -70.12 -64.93 -54.55 -45.89 -34.66 -24.55 -19.96 -12.02" y="0">SKCM-EE-A2HX-TM</text>
<text filter="url(#pl)" transform="translate(224,669) rotate(-90) scale(1.028,1)" x="-140.33 -129.94 -119.56 -108.32 -95.36 -90.18 -79.79 -69.41 -64.23 -53.85 -45.19 -34.81 -24.55 -19.96 -12.02" y="0">SKCM-XV-A1AK-TM</text>
<text filter="url(#pl)" transform="translate(228,669) rotate(-90) scale(1.028,1)" x="-139.65 -129.27 -118.88 -107.64 -94.68 -89.50 -79.11 -67.87 -62.69 -52.31 -43.65 -34.15 -24.55 -19.96 -12.02" y="0">SKCM-ER-A1ZB-TM</text>
<text filter="url(#pl)" transform="translate(232,669) rotate(-90) scale(1.028,1)" x="-138.60 -128.22 -117.84 -106.60 -93.63 -88.45 -78.07 -67.69 -62.50 -52.12 -43.47 -34.81 -24.55 -19.96 -12.02" y="0">SKCM-EB-A30K-TM</text>
<text filter="url(#pl)" transform="translate(236,669) rotate(-90) scale(1.028,1)" x="-136.28 -125.90 -115.52 -104.28 -91.31 -86.13 -76.62 -66.24 -61.06 -50.68 -42.02 -32.51 -24.55 -19.96 -12.02" y="0">SKCM-FS-A5Z6-TM</text>
<text filter="url(#pl)" transform="translate(240,669) rotate(-90) scale(1.028,1)" x="-138.06 -127.68 -117.30 -106.06 -93.09 -87.91 -77.53 -65.42 -60.24 -49.86 -41.20 -32.55 -24.55 -19.96 -12.02" y="0">SKCM-YG-A175-TM</text>
<text filter="url(#pl)" transform="translate(243,669) rotate(-90) scale(1.028,1)" x="-141.55 -131.17 -120.79 -109.55 -96.58 -91.40 -79.29 -68.05 -62.87 -52.49 -43.83 -33.45 -24.55 -19.96 -12.02" y="0">SKCM-GN-A7VF-TM</text>
<text filter="url(#pl)" transform="translate(247,669) rotate(-90) scale(1.028,1)" x="-141.50 -131.11 -120.73 -109.49 -96.53 -91.35 -80.96 -68.86 -63.68 -53.29 -44.64 -34.26 -24.55 -19.96 -12.02" y="0">SKCM-YG-A1XS-TM</text>
<text filter="url(#pl)" transform="translate(251,669) rotate(-90) scale(1.028,1)" x="-137.07 -126.69 -116.31 -105.07 -92.10 -86.92 -75.68 -67.02 -61.84 -51.46 -42.80 -34.15 -24.55 -19.96 -12.02" y="0">SKCM-D9-A29B-TM</text>
<text filter="url(#pl)" transform="translate(255,669) rotate(-90) scale(1.028,1)" x="-139.45 -129.07 -118.69 -107.45 -94.48 -89.30 -78.92 -68.54 -63.36 -52.97 -44.32 -34.81 -24.55 -19.96 -12.02" y="0">SKCM-XV-A8ZK-TM</text>
<text filter="url(#pl)" transform="translate(259,669) rotate(-90) scale(1.028,1)" x="-139.57 -129.19 -118.81 -107.57 -94.60 -89.42 -79.04 -67.80 -62.61 -52.23 -43.58 -34.92 -24.55 -19.96 -12.02" y="0">SKCM-ER-A09V-TM</text>
<text filter="url(#pl)" transform="translate(262,669) rotate(-90) scale(1.028,1)" x="-136.51 -126.13 -115.75 -104.51 -91.54 -86.36 -75.98 -66.47 -61.29 -50.90 -42.25 -33.59 -24.55 -19.96 -12.02" y="0">SKCM-BF-A49Z-TM</text>
<text filter="url(#pl)" transform="translate(266,669) rotate(-90) scale(1.028,1)" x="-143.20 -132.82 -122.43 -111.19 -98.23 -93.05 -83.54 -68.85 -63.67 -53.28 -44.63 -32.52 -24.55 -19.96 -12.02" y="0">SKCM-FW-A5Q8-TM</text>
<text filter="url(#pl)" transform="translate(270,669) rotate(-90) scale(1.028,1)" x="-143.22 -132.84 -122.46 -111.22 -98.25 -93.07 -81.83 -70.59 -65.41 -55.03 -46.37 -35.13 -24.55 -19.96 -12.02" y="0">SKCM-HR-A3NR-TM</text>
<text filter="url(#pl)" transform="translate(274,669) rotate(-90) scale(1.028,1)" x="-140.56 -130.18 -119.80 -108.56 -95.59 -90.41 -80.03 -67.92 -62.74 -52.36 -43.70 -32.46 -24.55 -19.96 -12.02" y="0">SKCM-YG-A3N9-TM</text>
<text filter="url(#pl)" transform="translate(278,669) rotate(-90) scale(1.028,1)" x="-139.66 -129.28 -118.90 -107.66 -94.69 -89.51 -79.13 -68.75 -63.57 -53.18 -44.53 -34.15 -24.55 -19.96 -12.02" y="0">SKCM-EB-A5BB-TM</text>
<text filter="url(#pl)" transform="translate(282,669) rotate(-90) scale(1.028,1)" x="-140.93 -130.55 -120.17 -108.93 -95.97 -90.78 -78.68 -69.17 -63.99 -53.61 -44.95 -34.57 -24.55 -19.96 -12.02" y="0">SKCM-GF-A7SN-TM</text>
<text filter="url(#pl)" transform="translate(285,669) rotate(-90) scale(1.028,1)" x="-139.97 -129.58 -119.20 -107.96 -95.00 -89.82 -79.43 -68.19 -63.01 -52.63 -43.97 -33.59 -24.55 -19.96 -12.02" y="0">SKCM-ER-A7YZ-TM</text>
<text filter="url(#pl)" transform="translate(289,669) rotate(-90) scale(1.028,1)" x="-144.96 -134.58 -124.20 -112.96 -100.00 -94.81 -84.43 -72.33 -67.14 -56.76 -48.11 -36.00 -24.55 -19.96 -12.02" y="0">SKCM-YG-A3GQ-TM</text>
<text filter="url(#pl)" transform="translate(293,669) rotate(-90) scale(1.028,1)" x="-141.39 -131.01 -120.62 -109.38 -96.42 -91.24 -80.85 -68.75 -63.57 -53.18 -44.53 -34.15 -24.55 -19.96 -12.02" y="0">SKCM-YG-A3XP-TM</text>
<text filter="url(#pl)" transform="translate(297,669) rotate(-90) scale(1.028,1)" x="-138.88 -128.50 -118.12 -106.88 -93.91 -88.73 -76.62 -67.12 -61.93 -51.55 -42.90 -32.51 -24.55 -19.96 -12.02" y="0">SKCM-GF-A9A6-TM</text>
<text filter="url(#pl)" transform="translate(301,669) rotate(-90) scale(1.028,1)" x="-138.10 -127.72 -117.34 -106.10 -93.13 -87.95 -76.71 -68.05 -62.87 -52.49 -43.83 -32.59 -24.55 -19.96 -12.02" y="0">SKCM-D9-A1H0-TM</text>
<text filter="url(#pl)" transform="translate(304,669) rotate(-90) scale(1.028,1)" x="-144.05 -133.67 -123.29 -112.05 -99.08 -93.90 -84.39 -69.70 -64.52 -54.14 -45.48 -32.51 -24.55 -19.96 -12.02" y="0">SKCM-FW-A7M3-TM</text>
<text filter="url(#pl)" transform="translate(308,669) rotate(-90) scale(1.028,1)" x="-138.05 -127.67 -117.29 -106.05 -93.08 -87.90 -76.66 -65.42 -60.24 -49.86 -41.20 -32.55 -24.55 -19.96 -12.02" y="0">SKCM-HR-A115-TM</text>
<text filter="url(#pl)" transform="translate(312,669) rotate(-90) scale(1.028,1)" x="-139.06 -128.68 -118.30 -107.06 -94.09 -88.91 -76.80 -65.56 -60.38 -50.00 -41.34 -32.69 -24.55 -19.96 -12.02" y="0">SKCM-GN-A1LL-TM</text>
<text filter="url(#pl)" transform="translate(316,669) rotate(-90) scale(1.028,1)" x="-140.64 -130.26 -119.88 -108.64 -95.68 -90.49 -78.39 -67.15 -61.96 -51.58 -42.93 -32.55 -24.55 -19.96 -12.02" y="0">SKCM-GN-A0K5-TM</text>
<text filter="url(#pl)" transform="translate(320,669) rotate(-90) scale(1.028,1)" x="-141.01 -130.63 -120.25 -109.01 -96.05 -90.86 -78.76 -67.52 -62.33 -51.95 -43.30 -34.64 -24.55 -19.96 -12.02" y="0">SKCM-GN-A96Y-TM</text>
<text filter="url(#pl)" transform="translate(324,669) rotate(-90) scale(1.028,1)" x="-136.20 -125.81 -115.43 -104.19 -91.23 -86.05 -74.81 -66.15 -60.97 -50.59 -41.93 -34.15 -24.55 -19.96 -12.02" y="0">SKCM-D3-A8JB-TM</text>
<text filter="url(#pl)" transform="translate(327,669) rotate(-90) scale(1.028,1)" x="-129.72 -119.34 -108.96 -97.72 -84.76 -79.57 -75.25 -64.01 -58.82 -48.44 -39.79 -31.13 -24.55 -19.96 -12.02" y="0">SKCM-IH-A19J-TM</text>
<text filter="url(#pl)" transform="translate(331,669) rotate(-90) scale(1.028,1)" x="-139.66 -129.28 -118.90 -107.66 -94.69 -89.51 -79.13 -68.75 -63.57 -53.18 -44.53 -34.15 -24.55 -19.96 -12.02" y="0">SKCM-EB-A3PB-TM</text>
<text filter="url(#pl)" transform="translate(335,669) rotate(-90) scale(1.028,1)" x="-139.75 -129.37 -118.99 -107.75 -94.79 -89.60 -78.36 -67.98 -62.80 -52.42 -43.76 -32.52 -24.55 -19.96 -12.02" y="0">SKCM-DA-A3U8-TM</text>
<text filter="url(#pl)" transform="translate(339,669) rotate(-90) scale(1.028,1)" x="-144.08 -133.70 -123.32 -112.08 -99.11 -93.93 -83.55 -73.17 -67.98 -57.60 -48.95 -34.26 -24.55 -19.96 -12.02" y="0">SKCM-XV-A9WS-TM</text>
<text filter="url(#pl)" transform="translate(343,669) rotate(-90) scale(1.028,1)" x="-138.87 -128.49 -118.11 -106.87 -93.91 -88.72 -76.62 -67.11 -61.93 -51.55 -42.89 -35.11 -24.55 -19.96 -12.02" y="0">SKCM-GF-A6JD-TM</text>
<text filter="url(#pl)" transform="translate(347,669) rotate(-90) scale(1.028,1)" x="-133.60 -123.22 -112.84 -101.60 -88.64 -83.45 -73.95 -65.29 -60.11 -49.72 -41.07 -32.41 -24.55 -19.96 -12.02" y="0">SKCM-Z2-A792-TM</text>
<text filter="url(#pl)" transform="translate(350,669) rotate(-90) scale(1.028,1)" x="-135.37 -124.99 -114.61 -103.37 -90.41 -85.22 -75.72 -67.06 -61.88 -51.50 -42.84 -32.46 -24.55 -19.96 -12.02" y="0">SKCM-Z2-A2K9-TM</text>
<text filter="url(#pl)" transform="translate(354,669) rotate(-90) scale(1.028,1)" x="-139.26 -128.88 -118.50 -107.26 -94.29 -89.11 -77.87 -69.21 -64.03 -53.65 -44.99 -36.33 -24.55 -19.96 -12.02" y="0">SKCM-D3-A04M-TM</text>
<text filter="url(#pl)" transform="translate(358,669) rotate(-90) scale(1.028,1)" x="-144.63 -134.25 -123.87 -112.63 -99.67 -94.48 -84.10 -72.00 -66.81 -56.43 -47.78 -34.81 -24.55 -19.96 -12.02" y="0">SKCM-YG-A2MK-TM</text>
<text filter="url(#pl)" transform="translate(362,669) rotate(-90) scale(1.028,1)" x="-144.92 -134.54 -124.15 -112.91 -99.95 -94.77 -85.26 -70.57 -65.39 -55.00 -46.35 -35.11 -24.55 -19.96 -12.02" y="0">SKCM-FW-A9HD-TM</text>
<text filter="url(#pl)" transform="translate(366,669) rotate(-90) scale(1.028,1)" x="-135.43 -125.05 -114.67 -103.43 -90.46 -85.28 -75.77 -65.39 -60.21 -49.83 -41.17 -32.51 -24.55 -19.96 -12.02" y="0">SKCM-FS-A896-TM</text>
<text filter="url(#pl)" transform="translate(369,669) rotate(-90) scale(1.028,1)" x="-140.64 -130.26 -119.88 -108.64 -95.67 -90.49 -79.25 -70.59 -65.41 -55.03 -46.37 -35.13 -24.55 -19.96 -12.02" y="0">SKCM-D9-A8DR-TM</text>
<text filter="url(#pl)" transform="translate(373,669) rotate(-90) scale(1.028,1)" x="-139.34 -128.96 -118.58 -107.34 -94.38 -89.19 -79.69 -71.03 -65.85 -55.47 -46.81 -35.57 -24.55 -19.96 -12.02" y="0">SKCM-Z2-A4CG-TM</text>
<text filter="url(#pl)" transform="translate(377,669) rotate(-90) scale(1.028,1)" x="-144.13 -133.75 -123.36 -112.12 -99.16 -93.98 -79.29 -68.90 -63.72 -53.34 -44.68 -34.30 -24.55 -19.96 -12.02" y="0">SKCM-WE-A7BE-TM</text>
<text filter="url(#pl)" transform="translate(381,669) rotate(-90) scale(1.028,1)" x="-135.45 -125.06 -114.68 -103.44 -90.48 -85.29 -74.05 -65.40 -60.22 -49.83 -41.18 -32.52 -24.55 -19.96 -12.02" y="0">SKCM-D9-A588-TM</text>
<text filter="url(#pl)" transform="translate(385,669) rotate(-90) scale(1.028,1)" x="-136.31 -125.93 -115.55 -104.31 -91.34 -86.16 -75.78 -65.40 -60.22 -49.83 -41.18 -32.52 -24.55 -19.96 -12.02" y="0">SKCM-XV-A448-TM</text>
<text filter="url(#pl)" transform="translate(389,669) rotate(-90) scale(1.028,1)" x="-136.32 -125.94 -115.56 -104.32 -91.35 -86.17 -76.66 -68.01 -62.82 -52.44 -43.79 -35.13 -24.55 -19.96 -12.02" y="0">SKCM-Z2-A78R-TM</text>
<text filter="url(#pl)" transform="translate(392,669) rotate(-90) scale(1.028,1)" x="-141.71 -131.32 -120.94 -109.70 -96.74 -91.56 -79.45 -68.21 -63.03 -52.64 -43.99 -32.75 -24.55 -19.96 -12.02" y="0">SKCM-GN-A4N4-TM</text>
<text filter="url(#pl)" transform="translate(396,669) rotate(-90) scale(1.028,1)" x="-143.12 -132.74 -122.36 -111.12 -98.15 -92.97 -78.28 -67.90 -62.71 -52.33 -43.68 -32.44 -24.55 -19.96 -12.02" y="0">SKCM-WE-A6H1-TM</text>
<text filter="url(#pl)" transform="translate(400,669) rotate(-90) scale(1.028,1)" x="-135.45 -125.07 -114.69 -103.45 -90.48 -85.30 -80.97 -69.73 -64.55 -54.17 -45.51 -35.13 -24.55 -19.96 -12.02" y="0">SKCM-IH-A5ER-TM</text>
<text filter="url(#pl)" transform="translate(404,669) rotate(-90) scale(1.028,1)" x="-139.56 -129.18 -118.80 -107.56 -94.59 -89.41 -79.90 -69.52 -64.34 -53.96 -45.30 -34.92 -24.55 -19.96 -12.02" y="0">SKCM-FS-A1PV-TM</text>
<text filter="url(#pl)" transform="translate(408,669) rotate(-90) scale(1.028,1)" x="-139.45 -129.07 -118.69 -107.45 -94.48 -89.30 -78.92 -68.54 -63.36 -52.97 -44.32 -34.81 -24.55 -19.96 -12.02" y="0">SKCM-EB-A2ZK-TM</text>
<text filter="url(#pl)" transform="translate(412,669) rotate(-90) scale(1.028,1)" x="-138.91 -128.53 -118.15 -106.91 -93.95 -88.76 -79.26 -68.88 -63.69 -53.31 -44.65 -36.00 -24.55 -19.96 -12.02" y="0">SKCM-FS-A25Q-TM</text>
<text filter="url(#pl)" transform="translate(415,669) rotate(-90) scale(1.028,1)" x="-137.33 -126.95 -116.57 -105.33 -92.37 -87.18 -75.94 -65.56 -60.38 -50.00 -41.34 -32.69 -24.55 -19.96 -12.02" y="0">SKCM-DA-A67L-TM</text>
<text filter="url(#pl)" transform="translate(419,669) rotate(-90) scale(1.028,1)" x="-138.03 -127.65 -117.27 -106.03 -93.06 -87.88 -76.64 -65.40 -60.22 -49.83 -41.18 -32.52 -24.55 -19.96 -12.02" y="0">SKCM-HR-A238-TM</text>
<text filter="url(#pl)" transform="translate(423,669) rotate(-90) scale(1.028,1)" x="-139.21 -128.83 -118.45 -107.21 -94.24 -89.06 -76.95 -67.45 -62.26 -51.88 -43.23 -34.57 -24.55 -19.96 -12.02" y="0">SKCM-GF-A52N-TM</text>
<text filter="url(#pl)" transform="translate(427,669) rotate(-90) scale(1.028,1)" x="-137.37 -126.99 -116.60 -105.36 -92.40 -87.22 -75.98 -67.32 -62.14 -51.76 -43.10 -33.59 -24.55 -19.96 -12.02" y="0">SKCM-D3-A5FZ-TM</text>
<text filter="url(#pl)" transform="translate(431,669) rotate(-90) scale(1.028,1)" x="-135.67 -125.29 -114.91 -103.67 -90.70 -85.52 -74.28 -65.63 -60.44 -50.06 -41.40 -32.75 -24.55 -19.96 -12.02" y="0">SKCM-D3-A554-TM</text>
<text filter="url(#pl)" transform="translate(434,669) rotate(-90) scale(1.028,1)" x="-137.96 -127.58 -117.20 -105.96 -92.99 -87.81 -78.30 -67.06 -61.88 -51.50 -42.84 -32.46 -24.55 -19.96 -12.02" y="0">SKCM-FR-A6X9-TM</text>
<text filter="url(#pl)" transform="translate(438,669) rotate(-90) scale(1.028,1)" x="-140.94 -130.56 -120.18 -108.94 -95.97 -90.79 -79.55 -69.17 -63.99 -53.61 -44.95 -34.57 -24.55 -19.96 -12.02" y="0">SKCM-DA-A8EH-TM</text>
<text filter="url(#pl)" transform="translate(442,669) rotate(-90) scale(1.028,1)" x="-138.90 -128.52 -118.13 -106.89 -93.93 -88.75 -78.37 -67.98 -62.80 -52.42 -43.76 -34.26 -24.55 -19.96 -12.02" y="0">SKCM-EB-A1FS-TM</text>
<text filter="url(#pl)" transform="translate(446,669) rotate(-90) scale(1.028,1)" x="-144.41 -134.03 -123.65 -112.41 -99.44 -94.26 -82.15 -70.91 -65.73 -55.35 -46.69 -33.73 -24.55 -19.96 -12.02" y="0">SKCM-GN-A0MT-TM</text>
<text filter="url(#pl)" transform="translate(450,669) rotate(-90) scale(1.028,1)" x="-140.53 -130.15 -119.77 -108.53 -95.57 -90.38 -78.28 -67.04 -61.85 -51.47 -42.82 -32.44 -24.55 -19.96 -12.02" y="0">SKCM-GN-A6S1-TM</text>
<text filter="url(#pl)" transform="translate(454,669) rotate(-90) scale(1.028,1)" x="-139.64 -129.26 -118.87 -107.63 -94.67 -89.49 -79.98 -65.29 -60.11 -49.72 -41.07 -32.41 -24.55 -19.96 -12.02" y="0">SKCM-FW-A887-TM</text>
<text filter="url(#pl)" transform="translate(457,669) rotate(-90) scale(1.028,1)" x="-138.87 -128.49 -118.11 -106.87 -93.91 -88.72 -78.34 -68.84 -63.65 -53.27 -44.62 -35.11 -24.55 -19.96 -12.02" y="0">SKCM-BF-A1TD-TM</text>
<text filter="url(#pl)" transform="translate(461,669) rotate(-90) scale(1.028,1)" x="-138.37 -127.99 -117.61 -106.37 -93.41 -88.22 -76.98 -68.33 -63.14 -52.76 -44.11 -33.73 -24.55 -19.96 -12.02" y="0">SKCM-D3-A6ET-TM</text>
<text filter="url(#pl)" transform="translate(465,669) rotate(-90) scale(1.028,1)" x="-139.82 -129.44 -119.06 -107.82 -94.86 -89.67 -78.43 -68.05 -62.87 -52.49 -43.83 -33.45 -24.55 -19.96 -12.02" y="0">SKCM-DA-A1SF-TM</text>
<text filter="url(#pl)" transform="translate(469,669) rotate(-90) scale(1.028,1)" x="-144.39 -134.01 -123.63 -112.39 -99.42 -94.24 -79.55 -69.17 -63.99 -53.61 -44.95 -34.57 -24.55 -19.96 -12.02" y="0">SKCM-WE-A1SH-TM</text>
<text filter="url(#pl)" transform="translate(473,669) rotate(-90) scale(1.028,1)" x="-137.93 -127.55 -117.16 -105.92 -92.96 -87.78 -77.40 -67.01 -61.83 -51.45 -42.79 -32.41 -24.55 -19.96 -12.02" y="0">SKCM-EB-A0X2-TM</text>
<text filter="url(#pl)" transform="translate(477,669) rotate(-90) scale(1.028,1)" x="-135.58 -125.20 -114.82 -103.58 -90.61 -85.43 -75.92 -67.27 -62.08 -51.70 -43.05 -35.26 -24.55 -19.96 -12.02" y="0">SKCM-Z2-A9JC-TM</text>
<text filter="url(#pl)" transform="translate(480,669) rotate(-90) scale(1.028,1)" x="-139.06 -128.68 -118.30 -107.06 -94.09 -88.91 -78.53 -68.15 -62.96 -52.58 -43.93 -32.69 -24.55 -19.96 -12.02" y="0">SKCM-EB-A3HL-TM</text>
<text filter="url(#pl)" transform="translate(484,669) rotate(-90) scale(1.028,1)" x="-142.65 -132.27 -121.89 -110.65 -97.68 -92.50 -82.99 -71.75 -66.57 -56.19 -47.53 -34.57 -24.55 -19.96 -12.02" y="0">SKCM-FR-A0MN-TM</text>
<text filter="url(#pl)" transform="translate(488,669) rotate(-90) scale(1.028,1)" x="-137.92 -127.54 -117.16 -105.92 -92.95 -87.77 -78.26 -67.02 -61.84 -51.46 -42.80 -34.15 -24.55 -19.96 -12.02" y="0">SKCM-FR-A49P-TM</text>
<text filter="url(#pl)" transform="translate(492,669) rotate(-90) scale(1.028,1)" x="-140.12 -129.74 -119.36 -108.12 -95.16 -89.97 -79.59 -69.21 -64.03 -53.65 -44.99 -36.33 -24.55 -19.96 -12.02" y="0">SKCM-EB-A78M-TM</text>
<text filter="url(#pl)" transform="translate(496,669) rotate(-90) scale(1.028,1)" x="-139.77 -129.39 -119.01 -107.77 -94.80 -89.62 -79.24 -68.86 -63.68 -53.29 -44.64 -34.26 -24.55 -19.96 -12.02" y="0">SKCM-EE-A5BS-TM</text>
<text filter="url(#pl)" transform="translate(499,669) rotate(-90) scale(1.028,1)" x="-138.04 -127.66 -117.27 -106.03 -93.07 -87.89 -77.50 -67.12 -61.94 -51.56 -42.90 -32.52 -24.55 -19.96 -12.02" y="0">SKCM-XV-A0B8-TM</text>
<text filter="url(#pl)" transform="translate(503,669) rotate(-90) scale(1.028,1)" x="-137.16 -126.78 -116.40 -105.16 -92.19 -87.01 -75.77 -65.39 -60.21 -49.83 -41.17 -32.51 -24.55 -19.96 -12.02" y="0">SKCM-DA-A386-TM</text>
<text filter="url(#pl)" transform="translate(507,669) rotate(-90) scale(1.028,1)" x="-141.48 -131.10 -120.72 -109.48 -96.51 -91.33 -80.95 -68.84 -63.66 -53.28 -44.62 -32.51 -24.55 -19.96 -12.02" y="0">SKCM-YG-A7G3-TM</text>
<text filter="url(#pl)" transform="translate(511,669) rotate(-90) scale(1.028,1)" x="-136.30 -125.92 -115.53 -104.29 -91.33 -86.15 -76.64 -65.40 -60.22 -49.83 -41.18 -32.52 -24.55 -19.96 -12.02" y="0">SKCM-FR-A818-TM</text>
<text filter="url(#pl)" transform="translate(515,669) rotate(-90) scale(1.028,1)" x="-141.03 -130.65 -120.27 -109.03 -96.06 -90.88 -79.64 -70.98 -65.80 -55.42 -46.76 -34.66 -24.55 -19.96 -12.02" y="0">SKCM-D9-A3QX-TM</text>
<text filter="url(#pl)" transform="translate(519,669) rotate(-90) scale(1.028,1)" x="-138.43 -128.05 -117.67 -106.43 -93.46 -88.28 -77.90 -67.52 -62.33 -51.95 -43.30 -34.64 -24.55 -19.96 -12.02" y="0">SKCM-EE-A21Y-TM</text>
<text filter="url(#pl)" transform="translate(522,669) rotate(-90) scale(1.028,1)" x="-139.82 -129.44 -119.06 -107.82 -94.85 -89.67 -79.29 -68.90 -63.72 -53.34 -44.68 -34.30 -24.55 -19.96 -12.02" y="0">SKCM-EB-A2AE-TM</text>
<text filter="url(#pl)" transform="translate(526,669) rotate(-90) scale(1.028,1)" x="-139.76 -129.37 -118.99 -107.75 -94.79 -89.61 -79.22 -67.98 -62.80 -52.42 -43.76 -35.11 -24.55 -19.96 -12.02" y="0">SKCM-ER-A6LD-TM</text>
<text filter="url(#pl)" transform="translate(530,669) rotate(-90) scale(1.028,1)" x="-139.29 -128.91 -118.52 -107.28 -94.32 -89.14 -77.90 -67.52 -62.33 -51.95 -43.30 -34.64 -24.55 -19.96 -12.02" y="0">SKCM-DA-A68U-TM</text>
<text filter="url(#pl)" transform="translate(534,669) rotate(-90) scale(1.028,1)" x="-138.04 -127.66 -117.28 -106.04 -93.08 -87.89 -77.51 -68.01 -62.82 -52.44 -43.79 -32.55 -24.55 -19.96 -12.02" y="0">SKCM-BF-A4C5-TM</text>
<text filter="url(#pl)" transform="translate(538,669) rotate(-90) scale(1.028,1)" x="-136.52 -126.14 -115.76 -104.52 -91.56 -86.37 -75.13 -66.48 -61.29 -50.91 -42.26 -32.75 -24.55 -19.96 -12.02" y="0">SKCM-D3-A2T4-TM</text>
<text filter="url(#pl)" transform="translate(542,669) rotate(-90) scale(1.028,1)" x="-139.30 -128.91 -118.53 -107.29 -94.33 -89.14 -78.76 -68.38 -63.20 -52.82 -44.16 -34.66 -24.55 -19.96 -12.02" y="0">SKCM-XV-A4ZX-TM</text>
<text filter="url(#pl)" transform="translate(545,669) rotate(-90) scale(1.028,1)" x="-141.62 -131.24 -120.86 -109.62 -96.65 -91.47 -81.96 -70.72 -65.54 -55.16 -46.50 -35.26 -24.55 -19.96 -12.02" y="0">SKCM-FR-A5RC-TM</text>
<text filter="url(#pl)" transform="translate(549,669) rotate(-90) scale(1.028,1)" x="-140.98 -130.60 -120.22 -108.98 -96.02 -90.83 -79.59 -70.94 -65.75 -55.37 -46.72 -36.33 -24.55 -19.96 -12.02" y="0">SKCM-D3-A3YM-TM</text>
<text filter="url(#pl)" transform="translate(553,669) rotate(-90) scale(1.028,1)" x="-138.97 -128.59 -118.20 -106.96 -94.00 -88.82 -78.43 -66.33 -61.15 -50.76 -42.11 -33.45 -24.55 -19.96 -12.02" y="0">SKCM-YG-A50F-TM</text>
<text filter="url(#pl)" transform="translate(557,669) rotate(-90) scale(1.028,1)" x="-139.22 -128.84 -118.45 -107.21 -94.25 -89.07 -77.83 -67.45 -62.26 -51.88 -43.23 -34.57 -24.55 -19.96 -12.02" y="0">SKCM-DA-A48N-TM</text>
<text filter="url(#pl)" transform="translate(561,669) rotate(-90) scale(1.028,1)" x="-138.97 -128.59 -118.20 -106.96 -94.00 -88.82 -78.43 -68.05 -62.87 -52.49 -43.83 -33.45 -24.55 -19.96 -12.02" y="0">SKCM-EB-A8AF-TM</text>
<text filter="url(#pl)" transform="translate(564,669) rotate(-90) scale(1.028,1)" x="-137.95 -127.57 -117.19 -105.95 -92.98 -87.80 -77.42 -67.04 -61.85 -51.47 -42.82 -32.44 -24.55 -19.96 -12.02" y="0">SKCM-EE-A1K1-TM</text>
<text filter="url(#pl)" transform="translate(568,669) rotate(-90) scale(1.028,1)" x="-140.42 -130.04 -119.66 -108.42 -95.45 -90.27 -80.76 -69.52 -64.34 -53.96 -45.30 -34.92 -24.55 -19.96 -12.02" y="0">SKCM-FR-A6BV-TM</text>
<text filter="url(#pl)" transform="translate(572,669) rotate(-90) scale(1.028,1)" x="-139.68 -129.30 -118.92 -107.68 -94.72 -89.53 -77.43 -66.19 -61.00 -50.62 -41.97 -32.46 -24.55 -19.96 -12.02" y="0">SKCM-GN-A3F9-TM</text>
<text filter="url(#pl)" transform="translate(576,669) rotate(-90) scale(1.028,1)" x="-144.88 -134.50 -124.12 -112.88 -99.91 -94.73 -84.35 -72.24 -67.06 -56.68 -48.02 -39.37 -24.55 -19.96 -12.02" y="0">SKCM-YG-A90W-TM</text>
<text filter="url(#pl)" transform="translate(580,669) rotate(-90) scale(1.028,1)" x="-141.18 -130.80 -120.42 -109.18 -96.22 -91.03 -80.65 -70.27 -65.09 -54.71 -46.05 -34.81 -24.55 -19.96 -12.02" y="0">SKCM-EE-A2UK-TM</text>
<text filter="url(#pl)" transform="translate(584,669) rotate(-90) scale(1.028,1)" x="-138.90 -128.51 -118.13 -106.89 -93.93 -88.74 -76.64 -65.40 -60.22 -49.83 -41.18 -32.52 -24.55 -19.96 -12.02" y="0">SKCM-GN-A838-TM</text>
<text filter="url(#pl)" transform="translate(587,669) rotate(-90) scale(1.028,1)" x="-138.80 -128.41 -118.03 -106.79 -93.83 -88.64 -77.40 -67.02 -61.84 -51.46 -42.80 -34.15 -24.55 -19.96 -12.02" y="0">SKCM-DA-A88B-TM</text>
<text filter="url(#pl)" transform="translate(591,669) rotate(-90) scale(1.028,1)" x="-143.36 -132.98 -122.60 -111.36 -98.40 -93.21 -81.11 -69.87 -64.68 -54.30 -45.65 -35.26 -24.55 -19.96 -12.02" y="0">SKCM-GN-A1BC-TM</text>
<text filter="url(#pl)" transform="translate(595,669) rotate(-90) scale(1.028,1)" x="-144.14 -133.76 -123.38 -112.14 -99.17 -93.99 -79.30 -68.92 -63.74 -53.35 -44.70 -32.59 -24.55 -19.96 -12.02" y="0">SKCM-WE-A5G0-TM</text>
<text filter="url(#pl)" transform="translate(599,669) rotate(-90) scale(1.028,1)" x="-140.52 -130.14 -119.76 -108.52 -95.55 -90.37 -79.99 -69.61 -64.42 -54.04 -45.39 -34.15 -24.55 -19.96 -12.02" y="0">SKCM-XV-A8DB-TM</text>
<text filter="url(#pl)" transform="translate(603,669) rotate(-90) scale(1.028,1)" x="-137.18 -126.80 -116.42 -105.18 -92.21 -87.03 -75.79 -67.13 -61.95 -51.57 -42.91 -34.26 -24.55 -19.96 -12.02" y="0">SKCM-D3-A37S-TM</text>
<text filter="url(#pl)" transform="translate(607,669) rotate(-90) scale(1.028,1)" x="-138.04 -127.66 -117.27 -106.03 -93.07 -87.89 -77.50 -67.12 -61.94 -51.56 -42.90 -32.52 -24.55 -19.96 -12.02" y="0">SKCM-XV-A7E8-TM</text>
<text filter="url(#pl)" transform="translate(610,669) rotate(-90) scale(1.028,1)" x="-139.82 -129.44 -119.06 -107.82 -94.85 -89.67 -79.29 -67.18 -62.00 -51.62 -42.96 -34.30 -24.55 -19.96 -12.02" y="0">SKCM-YG-A19E-TM</text>
<text filter="url(#pl)" transform="translate(614,669) rotate(-90) scale(1.028,1)" x="-140.63 -130.25 -119.87 -108.63 -95.66 -90.48 -79.24 -68.86 -63.68 -53.29 -44.64 -34.26 -24.55 -19.96 -12.02" y="0">SKCM-DA-A4ES-TM</text>
<text filter="url(#pl)" transform="translate(618,669) rotate(-90) scale(1.028,1)" x="-141.51 -131.13 -120.75 -109.51 -96.54 -91.36 -80.98 -68.87 -63.69 -53.31 -44.65 -32.55 -24.55 -19.96 -12.02" y="0">SKCM-YG-A3Q5-TM</text>
<text filter="url(#pl)" transform="translate(622,669) rotate(-90) scale(1.028,1)" x="-138.01 -127.63 -117.25 -106.01 -93.05 -87.86 -78.36 -67.12 -61.93 -51.55 -42.90 -32.51 -24.55 -19.96 -12.02" y="0">SKCM-FR-A6E6-TM</text>
<text filter="url(#pl)" transform="translate(626,669) rotate(-90) scale(1.028,1)" x="-143.26 -132.88 -122.50 -111.26 -98.29 -93.11 -81.00 -69.76 -64.58 -54.20 -45.54 -34.30 -24.55 -19.96 -12.02" y="0">SKCM-GN-A0NE-TM</text>
<text filter="url(#pl)" transform="translate(629,669) rotate(-90) scale(1.028,1)" x="-143.02 -132.64 -122.26 -111.02 -98.05 -92.87 -80.76 -69.52 -64.34 -53.96 -45.30 -34.92 -24.55 -19.96 -12.02" y="0">SKCM-GN-A5SV-TM</text>
<text filter="url(#pl)" transform="translate(633,669) rotate(-90) scale(1.028,1)" x="-140.62 -130.24 -119.86 -108.62 -95.66 -90.47 -80.09 -67.98 -62.80 -52.42 -43.76 -35.11 -24.55 -19.96 -12.02" y="0">SKCM-YG-A06D-TM</text>
<text filter="url(#pl)" transform="translate(637,669) rotate(-90) scale(1.028,1)" x="-143.11 -132.73 -122.35 -111.11 -98.14 -92.96 -82.58 -70.47 -65.29 -54.91 -46.25 -34.15 -24.55 -19.96 -12.02" y="0">SKCM-YG-A4GP-TM</text>
<text filter="url(#pl)" transform="translate(641,669) rotate(-90) scale(1.028,1)" x="-142.74 -132.36 -121.98 -110.74 -97.77 -92.59 -77.90 -67.52 -62.33 -51.95 -43.30 -34.64 -24.55 -19.96 -12.02" y="0">SKCM-WE-A49U-TM</text>
<text filter="url(#pl)" transform="translate(645,669) rotate(-90) scale(1.028,1)" x="-138.36 -127.98 -117.60 -106.36 -93.39 -88.21 -77.83 -67.45 -62.26 -51.88 -43.23 -34.57 -24.55 -19.96 -12.02" y="0">SKCM-XV-A75H-TM</text>
<text filter="url(#pl)" transform="translate(649,669) rotate(-90) scale(1.028,1)" x="-140.69 -130.31 -119.93 -108.69 -95.72 -90.54 -80.16 -68.05 -62.87 -52.49 -43.83 -33.45 -24.55 -19.96 -12.02" y="0">SKCM-YG-A3VF-TM</text>
<text filter="url(#pl)" transform="translate(652,669) rotate(-90) scale(1.028,1)" x="-139.78 -129.40 -119.02 -107.78 -94.81 -89.63 -79.25 -68.01 -62.82 -52.44 -43.79 -32.55 -24.55 -19.96 -12.02" y="0">SKCM-ER-A0U5-TM</text>
<text filter="url(#pl)" transform="translate(656,669) rotate(-90) scale(1.028,1)" x="-139.23 -128.85 -118.47 -107.23 -94.26 -89.08 -77.84 -66.60 -61.42 -51.04 -42.38 -33.73 -24.55 -19.96 -12.02" y="0">SKCM-HR-A84T-TM</text>
<text filter="url(#pl)" transform="translate(660,669) rotate(-90) scale(1.028,1)" x="-140.68 -130.30 -119.91 -108.67 -95.71 -90.53 -80.14 -68.90 -63.72 -53.34 -44.68 -34.30 -24.55 -19.96 -12.02" y="0">SKCM-ER-A3PE-TM</text>
<text filter="url(#pl)" transform="translate(664,669) rotate(-90) scale(1.028,1)" x="-138.90 -128.52 -118.13 -106.89 -93.93 -88.75 -76.64 -67.13 -61.95 -51.57 -42.91 -34.26 -24.55 -19.96 -12.02" y="0">SKCM-GF-A29S-TM</text>
<text filter="url(#pl)" transform="translate(668,669) rotate(-90) scale(1.028,1)" x="-136.64 -126.26 -115.88 -104.64 -91.67 -86.49 -76.98 -66.60 -61.42 -51.04 -42.38 -33.73 -24.55 -19.96 -12.02" y="0">SKCM-FS-A28T-TM</text>
<text filter="url(#pl)" transform="translate(672,669) rotate(-90) scale(1.028,1)" x="-141.38 -131.00 -120.62 -109.38 -96.41 -91.23 -80.85 -68.74 -63.56 -53.18 -44.52 -32.41 -24.55 -19.96 -12.02" y="0">SKCM-YG-A5Q7-TM</text>
<text filter="url(#pl)" transform="translate(675,669) rotate(-90) scale(1.028,1)" x="-137.33 -126.95 -116.57 -105.33 -92.37 -87.18 -75.94 -67.29 -62.10 -51.72 -43.07 -32.69 -24.55 -19.96 -12.02" y="0">SKCM-D3-A6BL-TM</text>
<text filter="url(#pl)" transform="translate(679,669) rotate(-90) scale(1.028,1)" x="-136.21 -125.83 -115.45 -104.21 -91.24 -86.06 -76.55 -65.31 -60.13 -49.75 -41.09 -32.44 -24.55 -19.96 -12.02" y="0">SKCM-FR-A741-TM</text>
<text filter="url(#pl)" transform="translate(683,669) rotate(-90) scale(1.028,1)" x="-140.15 -129.76 -119.38 -108.14 -95.18 -90.00 -78.76 -67.52 -62.33 -51.95 -43.30 -34.64 -24.55 -19.96 -12.02" y="0">SKCM-HR-A22Y-TM</text>
<text filter="url(#pl)" transform="translate(687,669) rotate(-90) scale(1.028,1)" x="-140.16 -129.78 -119.40 -108.16 -95.19 -90.01 -78.77 -70.12 -64.93 -54.55 -45.89 -34.66 -24.55 -19.96 -12.02" y="0">SKCM-D3-A5HX-TM</text>
<text filter="url(#pl)" transform="translate(691,669) rotate(-90) scale(1.028,1)" x="-137.08 -126.70 -116.31 -105.07 -92.11 -86.93 -77.42 -67.04 -61.85 -51.47 -42.82 -32.44 -24.55 -19.96 -12.02" y="0">SKCM-FS-A5X1-TM</text>
<text filter="url(#pl)" transform="translate(694,669) rotate(-90) scale(1.028,1)" x="-140.15 -129.77 -119.39 -108.15 -95.19 -90.00 -79.62 -69.24 -64.06 -53.68 -45.02 -34.64 -24.55 -19.96 -12.02" y="0">SKCM-EB-A3AU-TM</text>
<text filter="url(#pl)" transform="translate(698,669) rotate(-90) scale(1.028,1)" x="-139.67 -129.29 -118.91 -107.67 -94.70 -89.52 -78.28 -67.04 -61.85 -51.47 -42.82 -32.44 -24.55 -19.96 -12.02" y="0">SKCM-HR-A5E1-TM</text>
<text filter="url(#pl)" transform="translate(702,669) rotate(-90) scale(1.028,1)" x="-133.91 -123.53 -113.15 -101.91 -88.94 -83.76 -79.43 -68.19 -63.01 -52.63 -43.97 -33.59 -24.55 -19.96 -12.02" y="0">SKCM-IH-A9EZ-TM</text>
<text filter="url(#pl)" transform="translate(706,669) rotate(-90) scale(1.028,1)" x="-139.22 -128.84 -118.46 -107.22 -94.26 -89.07 -79.57 -69.19 -64.00 -53.62 -44.97 -33.73 -24.55 -19.96 -12.02" y="0">SKCM-FS-A4DT-TM</text>
<text filter="url(#pl)" transform="translate(710,669) rotate(-90) scale(1.028,1)" x="-142.04 -131.66 -121.28 -110.04 -97.08 -91.89 -80.65 -70.27 -65.09 -54.71 -46.05 -34.81 -24.55 -19.96 -12.02" y="0">SKCM-DA-A0UK-TM</text>
<text filter="url(#pl)" transform="translate(714,669) rotate(-90) scale(1.028,1)" x="-139.75 -129.37 -118.98 -107.74 -94.78 -89.60 -80.09 -65.40 -60.22 -49.83 -41.18 -32.52 -24.55 -19.96 -12.02" y="0">SKCM-FW-A438-TM</text>
<text filter="url(#pl)" transform="translate(717,669) rotate(-90) scale(1.028,1)" x="-136.29 -125.91 -115.53 -104.29 -91.32 -86.14 -74.90 -66.24 -61.06 -50.68 -42.02 -32.51 -24.55 -19.96 -12.02" y="0">SKCM-D3-A3Z3-TM</text>
<text filter="url(#pl)" transform="translate(721,669) rotate(-90) scale(1.028,1)" x="-138.97 -128.59 -118.20 -106.96 -94.00 -88.82 -78.43 -68.05 -62.87 -52.49 -43.83 -33.45 -24.55 -19.96 -12.02" y="0">SKCM-EE-A6PF-TM</text>
<text filter="url(#pl)" transform="translate(725,669) rotate(-90) scale(1.028,1)" x="-134.91 -124.52 -114.14 -102.90 -89.94 -84.76 -75.25 -64.01 -58.82 -48.44 -39.79 -31.13 -24.55 -19.96 -12.02" y="0">SKCM-FR-A64J-TM</text>
<text filter="url(#pl)" transform="translate(729,669) rotate(-90) scale(1.028,1)" x="-136.63 -126.25 -115.87 -104.63 -91.66 -86.48 -76.10 -66.59 -61.41 -51.03 -42.37 -31.13 -24.55 -19.96 -12.02" y="0">SKCM-BF-A7DJ-TM</text>
<text filter="url(#pl)" transform="translate(733,669) rotate(-90) scale(1.028,1)" x="-138.43 -128.05 -117.67 -106.43 -93.46 -88.28 -78.77 -67.53 -62.35 -51.97 -43.31 -34.66 -24.55 -19.96 -12.02" y="0">SKCM-FR-A72X-TM</text>
<text filter="url(#pl)" transform="translate(737,669) rotate(-90) scale(1.028,1)" x="-141.49 -131.11 -120.73 -109.49 -96.52 -91.34 -80.10 -68.86 -63.68 -53.29 -44.64 -34.26 -24.55 -19.96 -12.02" y="0">SKCM-HR-A4SS-TM</text>
<text filter="url(#pl)" transform="translate(740,669) rotate(-90) scale(1.028,1)" x="-138.03 -127.65 -117.27 -106.03 -93.06 -87.88 -77.50 -67.12 -61.93 -51.55 -42.90 -32.51 -24.55 -19.96 -12.02" y="0">SKCM-XV-A3V6-TM</text>
<text filter="url(#pl)" transform="translate(744,669) rotate(-90) scale(1.028,1)" x="-138.19 -127.80 -117.42 -106.18 -93.22 -88.03 -77.65 -68.15 -62.96 -52.58 -43.93 -32.69 -24.55 -19.96 -12.02" y="0">SKCM-BF-A6HL-TM</text>
<text filter="url(#pl)" transform="translate(748,669) rotate(-90) scale(1.028,1)" x="-139.76 -129.38 -119.00 -107.76 -94.79 -89.61 -79.23 -67.12 -61.94 -51.56 -42.90 -32.52 -24.55 -19.96 -12.02" y="0">SKCM-YG-A1P8-TM</text>
<text filter="url(#pl)" transform="translate(752,669) rotate(-90) scale(1.028,1)" x="-143.42 -133.04 -122.66 -111.42 -98.46 -93.27 -83.77 -69.08 -63.89 -53.51 -44.86 -32.75 -24.55 -19.96 -12.02" y="0">SKCM-FW-A8Q4-TM</text>
<text filter="url(#pl)" transform="translate(756,669) rotate(-90) scale(1.028,1)" x="-134.92 -124.54 -114.16 -102.92 -89.95 -84.77 -74.39 -64.01 -58.82 -48.44 -39.79 -31.13 -24.55 -19.96 -12.02" y="0">SKCM-XV-A73J-TM</text>
<text filter="url(#pl)" transform="translate(759,669) rotate(-90) scale(1.028,1)" x="-138.95 -128.57 -118.19 -106.95 -93.98 -88.80 -78.42 -68.91 -63.73 -53.35 -44.69 -33.45 -24.55 -19.96 -12.02" y="0">SKCM-BF-A3RF-TM</text>
<text filter="url(#pl)" transform="translate(763,669) rotate(-90) scale(1.028,1)" x="-144.87 -134.48 -124.10 -112.86 -99.90 -94.71 -83.47 -73.09 -67.91 -57.53 -48.87 -39.37 -24.55 -19.96 -12.02" y="0">SKCM-DA-A5FW-TM</text>
<text filter="url(#pl)" transform="translate(767,669) rotate(-90) scale(1.028,1)" x="-139.22 -128.84 -118.45 -107.21 -94.25 -89.07 -77.83 -69.17 -63.99 -53.61 -44.95 -34.57 -24.55 -19.96 -12.02" y="0">SKCM-D3-A5SN-TM</text>
<text filter="url(#pl)" transform="translate(771,669) rotate(-90) scale(1.028,1)" x="-133.60 -123.22 -112.84 -101.60 -88.64 -83.45 -73.95 -65.29 -60.11 -49.72 -41.07 -32.41 -24.55 -19.96 -12.02" y="0">SKCM-Z2-A602-TM</text>
<text filter="url(#pl)" transform="translate(775,669) rotate(-90) scale(1.028,1)" x="-140.95 -130.57 -120.19 -108.95 -95.98 -90.80 -81.29 -66.60 -61.42 -51.04 -42.38 -33.73 -24.55 -19.96 -12.02" y="0">SKCM-FW-A30T-TM</text>
<text filter="url(#pl)" transform="translate(779,669) rotate(-90) scale(1.028,1)" x="-138.37 -127.98 -117.60 -106.36 -93.40 -88.22 -76.11 -66.60 -61.42 -51.04 -42.38 -33.73 -24.55 -19.96 -12.02" y="0">SKCM-GF-A07T-TM</text>
<text filter="url(#pl)" transform="translate(782,669) rotate(-90) scale(1.028,1)" x="-135.38 -125.00 -114.62 -103.38 -90.42 -85.23 -73.99 -65.34 -60.15 -49.77 -41.12 -32.46 -24.55 -19.96 -12.02" y="0">SKCM-D9-A289-TM</text>
<text filter="url(#pl)" transform="translate(786,669) rotate(-90) scale(1.028,1)" x="-141.49 -131.11 -120.73 -109.49 -96.52 -91.34 -80.10 -68.86 -63.68 -53.29 -44.64 -35.13 -24.55 -19.96 -12.02" y="0">SKCM-HR-A1TR-TM</text>
<text filter="url(#pl)" transform="translate(790,669) rotate(-90) scale(1.028,1)" x="-136.29 -125.91 -115.53 -104.29 -91.32 -86.14 -76.63 -65.39 -60.21 -49.83 -41.17 -32.51 -24.55 -19.96 -12.02" y="0">SKCM-FR-A643-TM</text>
<text filter="url(#pl)" transform="translate(794,669) rotate(-90) scale(1.028,1)" x="-132.98 -122.60 -112.22 -100.98 -88.01 -82.83 -78.51 -67.27 -62.08 -51.70 -43.05 -35.26 -24.55 -19.96 -12.02" y="0">SKCM-IH-A0JC-TM</text>
<text filter="url(#pl)" transform="translate(798,669) rotate(-90) scale(1.028,1)" x="-139.61 -129.23 -118.85 -107.61 -94.64 -89.46 -79.08 -67.84 -62.65 -52.27 -43.62 -34.96 -24.55 -19.96 -12.02" y="0">SKCM-ER-A77A-TM</text>
<text filter="url(#pl)" transform="translate(802,669) rotate(-90) scale(1.028,1)" x="-140.64 -130.26 -119.88 -108.64 -95.68 -90.49 -75.80 -65.42 -60.24 -49.86 -41.20 -32.55 -24.55 -19.96 -12.02" y="0">SKCM-WE-A695-TM</text>
<text filter="url(#pl)" transform="translate(805,669) rotate(-90) scale(1.028,1)" x="-145.82 -135.44 -125.06 -113.82 -100.85 -95.67 -83.57 -72.33 -67.14 -56.76 -48.11 -36.00 -24.55 -19.96 -12.02" y="0">SKCM-GN-A3GQ-TM</text>
<text filter="url(#pl)" transform="translate(809,669) rotate(-90) scale(1.028,1)" x="-143.67 -133.29 -122.90 -111.66 -98.70 -93.52 -78.83 -68.45 -63.26 -52.88 -44.23 -35.57 -24.55 -19.96 -12.02" y="0">SKCM-WE-A29G-TM</text>
<text filter="url(#pl)" transform="translate(813,669) rotate(-90) scale(1.028,1)" x="-143.92 -133.54 -123.15 -111.91 -98.95 -93.77 -81.66 -70.42 -65.24 -54.86 -46.20 -34.96 -24.55 -19.96 -12.02" y="0">SKCM-GN-A1CA-TM</text>
<text filter="url(#pl)" transform="translate(817,669) rotate(-90) scale(1.028,1)" x="-143.88 -133.50 -123.12 -111.88 -98.91 -93.73 -81.62 -70.38 -65.20 -54.82 -46.16 -34.92 -24.55 -19.96 -12.02" y="0">SKCM-GN-A3CV-TM</text>
<text filter="url(#pl)" transform="translate(821,669) rotate(-90) scale(1.028,1)" x="-135.43 -125.05 -114.67 -103.43 -90.46 -85.28 -75.77 -65.39 -60.21 -49.83 -41.17 -32.51 -24.55 -19.96 -12.02" y="0">SKCM-FS-A493-TM</text>
<text filter="url(#pl)" transform="translate(824,669) rotate(-90) scale(1.028,1)" x="-137.84 -127.45 -117.07 -105.83 -92.87 -87.69 -78.18 -69.52 -64.34 -53.96 -45.30 -34.92 -24.55 -19.96 -12.02" y="0">SKCM-Z2-A1EV-TM</text>
<text filter="url(#pl)" transform="translate(828,669) rotate(-90) scale(1.028,1)" x="-138.97 -128.58 -118.20 -106.96 -94.00 -88.82 -78.43 -68.05 -62.87 -52.49 -43.83 -32.59 -24.55 -19.96 -12.02" y="0">SKCM-EB-A9N0-TM</text>
<text filter="url(#pl)" transform="translate(832,669) rotate(-90) scale(1.028,1)" x="-140.47 -130.09 -119.71 -108.47 -95.51 -90.32 -79.94 -69.56 -64.38 -54.00 -45.34 -34.96 -24.55 -19.96 -12.02" y="0">SKCM-XV-A3AA-TM</text>
<text filter="url(#pl)" transform="translate(836,669) rotate(-90) scale(1.028,1)" x="-140.95 -130.57 -120.19 -108.95 -95.98 -90.80 -81.29 -66.60 -61.42 -51.04 -42.38 -33.73 -24.55 -19.96 -12.02" y="0">SKCM-FW-A45T-TM</text>
<text filter="url(#pl)" transform="translate(840,669) rotate(-90) scale(1.028,1)" x="-137.11 -126.73 -116.35 -105.11 -92.14 -86.96 -75.72 -65.34 -60.15 -49.77 -41.12 -32.46 -24.55 -19.96 -12.02" y="0">SKCM-DA-A369-TM</text>
<text filter="url(#pl)" transform="translate(844,669) rotate(-90) scale(1.028,1)" x="-135.32 -124.94 -114.56 -103.32 -90.35 -85.17 -80.85 -69.61 -64.42 -54.04 -45.39 -34.15 -24.55 -19.96 -12.02" y="0">SKCM-IH-A8RB-TM</text>
<text filter="url(#pl)" transform="translate(847,669) rotate(-90) scale(1.028,1)" x="-139.65 -129.27 -118.89 -107.65 -94.69 -89.50 -78.26 -69.61 -64.42 -54.04 -45.39 -34.15 -24.55 -19.96 -12.02" y="0">SKCM-D9-A4DB-TM</text>
<text filter="url(#pl)" transform="translate(851,669) rotate(-90) scale(1.028,1)" x="-137.24 -126.86 -116.48 -105.24 -92.27 -87.09 -76.71 -66.33 -61.15 -50.76 -42.11 -33.45 -24.55 -19.96 -12.02" y="0">SKCM-EB-A72F-TM</text>
<text filter="url(#pl)" transform="translate(855,669) rotate(-90) scale(1.028,1)" x="-138.24 -127.86 -117.48 -106.24 -93.27 -88.09 -76.85 -66.47 -61.29 -50.90 -42.25 -33.59 -24.55 -19.96 -12.02" y="0">SKCM-DA-A33Z-TM</text>
<text filter="url(#pl)" transform="translate(859,669) rotate(-90) scale(1.028,1)" x="-135.83 -125.45 -115.07 -103.83 -90.86 -85.68 -81.36 -70.12 -64.93 -54.55 -45.89 -34.66 -24.55 -19.96 -12.02" y="0">SKCM-IH-A7CX-TM</text>
<text filter="url(#pl)" transform="translate(863,669) rotate(-90) scale(1.028,1)" x="-137.49 -127.11 -116.73 -105.49 -92.52 -87.34 -76.10 -67.45 -62.26 -51.88 -43.23 -34.57 -24.55 -19.96 -12.02" y="0">SKCM-D3-A51N-TM</text>
<text filter="url(#pl)" transform="translate(867,669) rotate(-90) scale(1.028,1)" x="-137.23 -126.85 -116.46 -105.22 -92.26 -87.08 -75.84 -67.18 -62.00 -51.62 -42.96 -34.30 -24.55 -19.96 -12.02" y="0">SKCM-D9-A48E-TM</text>
<text filter="url(#pl)" transform="translate(870,669) rotate(-90) scale(1.028,1)" x="-140.43 -130.05 -119.66 -108.43 -95.46 -90.28 -79.04 -70.38 -65.20 -54.82 -46.16 -34.92 -24.55 -19.96 -12.02" y="0">SKCM-D9-A7NV-TM</text>
<text filter="url(#pl)" transform="translate(874,669) rotate(-90) scale(1.028,1)" x="-139.79 -129.41 -119.03 -107.79 -94.82 -89.64 -79.26 -68.88 -63.69 -53.31 -44.65 -36.00 -24.55 -19.96 -12.02" y="0">SKCM-EB-A35Q-TM</text>
<text filter="url(#pl)" transform="translate(878,669) rotate(-90) scale(1.028,1)" x="-138.78 -128.40 -118.02 -106.78 -93.81 -88.63 -78.25 -68.74 -63.56 -53.18 -44.52 -32.41 -24.55 -19.96 -12.02" y="0">SKCM-BF-A4G7-TM</text>
<text filter="url(#pl)" transform="translate(882,669) rotate(-90) scale(1.028,1)" x="-136.20 -125.82 -115.44 -104.20 -91.23 -86.05 -75.67 -65.29 -60.11 -49.72 -41.07 -32.41 -24.55 -19.96 -12.02" y="0">SKCM-EE-A372-TM</text>
<text filter="url(#pl)" transform="translate(886,669) rotate(-90) scale(1.028,1)" x="-137.95 -127.57 -117.19 -105.95 -92.98 -87.80 -77.42 -67.04 -61.85 -51.47 -42.82 -32.44 -24.55 -19.96 -12.02" y="0">SKCM-EE-A9K1-TM</text>
<text filter="url(#pl)" transform="translate(889,669) rotate(-90) scale(1.028,1)" x="-135.13 -124.75 -114.36 -103.13 -90.16 -84.98 -80.65 -69.41 -64.23 -53.85 -45.19 -34.81 -24.55 -19.96 -12.02" y="0">SKCM-IH-A3BK-TM</text>
<text filter="url(#pl)" transform="translate(893,669) rotate(-90) scale(1.028,1)" x="-144.43 -134.04 -123.66 -112.42 -99.46 -94.27 -83.03 -71.79 -66.61 -56.23 -47.57 -36.33 -24.55 -19.96 -12.02" y="0">SKCM-HR-A0DM-TM</text>
<text filter="url(#pl)" transform="translate(897,669) rotate(-90) scale(1.028,1)" x="-145.25 -134.87 -124.49 -113.25 -100.28 -95.10 -84.72 -73.48 -68.30 -57.92 -49.26 -34.57 -24.55 -19.96 -12.02" y="0">SKCM-ER-A7WH-TM</text>
<text filter="url(#pl)" transform="translate(901,669) rotate(-90) scale(1.028,1)" x="-139.21 -128.83 -118.45 -107.21 -94.24 -89.06 -78.68 -69.17 -63.99 -53.61 -44.95 -34.57 -24.55 -19.96 -12.02" y="0">SKCM-BF-A2XN-TM</text>
<text filter="url(#pl)" transform="translate(905,669) rotate(-90) scale(1.028,1)" x="-139.04 -128.66 -118.28 -107.04 -94.07 -88.89 -79.38 -68.14 -62.96 -52.58 -43.92 -35.26 -24.55 -19.96 -12.02" y="0">SKCM-FR-A85C-TM</text>
<text filter="url(#pl)" transform="translate(909,669) rotate(-90) scale(1.028,1)" x="-143.60 -133.22 -122.84 -111.60 -98.64 -93.45 -78.76 -68.38 -63.20 -52.82 -44.16 -34.66 -24.55 -19.96 -12.02" y="0">SKCM-WE-A6ZX-TM</text>
<text filter="url(#pl)" transform="translate(912,669) rotate(-90) scale(1.028,1)" x="-143.06 -132.68 -122.30 -111.06 -98.09 -92.91 -82.53 -71.29 -66.10 -55.72 -47.07 -34.96 -24.55 -19.96 -12.02" y="0">SKCM-ER-A2GA-TM</text>
<text filter="url(#pl)" transform="translate(916,669) rotate(-90) scale(1.028,1)" x="-134.08 -123.70 -113.32 -102.08 -89.11 -83.93 -79.61 -68.37 -63.18 -52.80 -44.15 -34.64 -24.55 -19.96 -12.02" y="0">SKCM-IH-A4FY-TM</text>
<text filter="url(#pl)" transform="translate(920,669) rotate(-90) scale(1.028,1)" x="-138.96 -128.58 -118.20 -106.96 -93.99 -88.81 -76.70 -67.19 -62.01 -51.63 -42.97 -32.59 -24.55 -19.96 -12.02" y="0">SKCM-GF-A1P0-TM</text>
<text filter="url(#pl)" transform="translate(924,669) rotate(-90) scale(1.028,1)" x="-137.24 -126.86 -116.48 -105.24 -92.27 -87.09 -76.71 -66.33 -61.15 -50.76 -42.11 -33.45 -24.55 -19.96 -12.02" y="0">SKCM-EE-A43F-TM</text>
<text filter="url(#pl)" transform="translate(928,669) rotate(-90) scale(1.028,1)" x="-139.97 -129.58 -119.20 -107.96 -95.00 -89.82 -79.43 -69.05 -63.87 -53.49 -44.83 -33.59 -24.55 -19.96 -12.02" y="0">SKCM-XV-A7NZ-TM</text>
<text filter="url(#pl)" transform="translate(932,669) rotate(-90) scale(1.028,1)" x="-146.59 -136.21 -125.83 -114.59 -101.62 -96.44 -84.33 -74.83 -69.64 -59.26 -50.61 -39.37 -24.55 -19.96 -12.02" y="0">SKCM-GF-A7NW-TM</text>
<text filter="url(#pl)" transform="translate(935,669) rotate(-90) scale(1.028,1)" x="-138.79 -128.40 -118.02 -106.78 -93.82 -88.64 -77.40 -67.01 -61.83 -51.45 -42.79 -32.41 -24.55 -19.96 -12.02" y="0">SKCM-DA-A7B2-TM</text>
<text filter="url(#pl)" transform="translate(939,669) rotate(-90) scale(1.028,1)" x="-138.97 -128.58 -118.20 -106.96 -94.00 -88.82 -78.43 -68.05 -62.87 -52.49 -43.83 -32.59 -24.55 -19.96 -12.02" y="0">SKCM-EE-A6C0-TM</text>
<text filter="url(#pl)" transform="translate(943,669) rotate(-90) scale(1.028,1)" x="-140.62 -130.24 -119.86 -108.62 -95.66 -90.47 -80.09 -69.71 -64.53 -54.15 -45.49 -35.11 -24.55 -19.96 -12.02" y="0">SKCM-EB-A7ED-TM</text>
</g>
</svg></body></html>
